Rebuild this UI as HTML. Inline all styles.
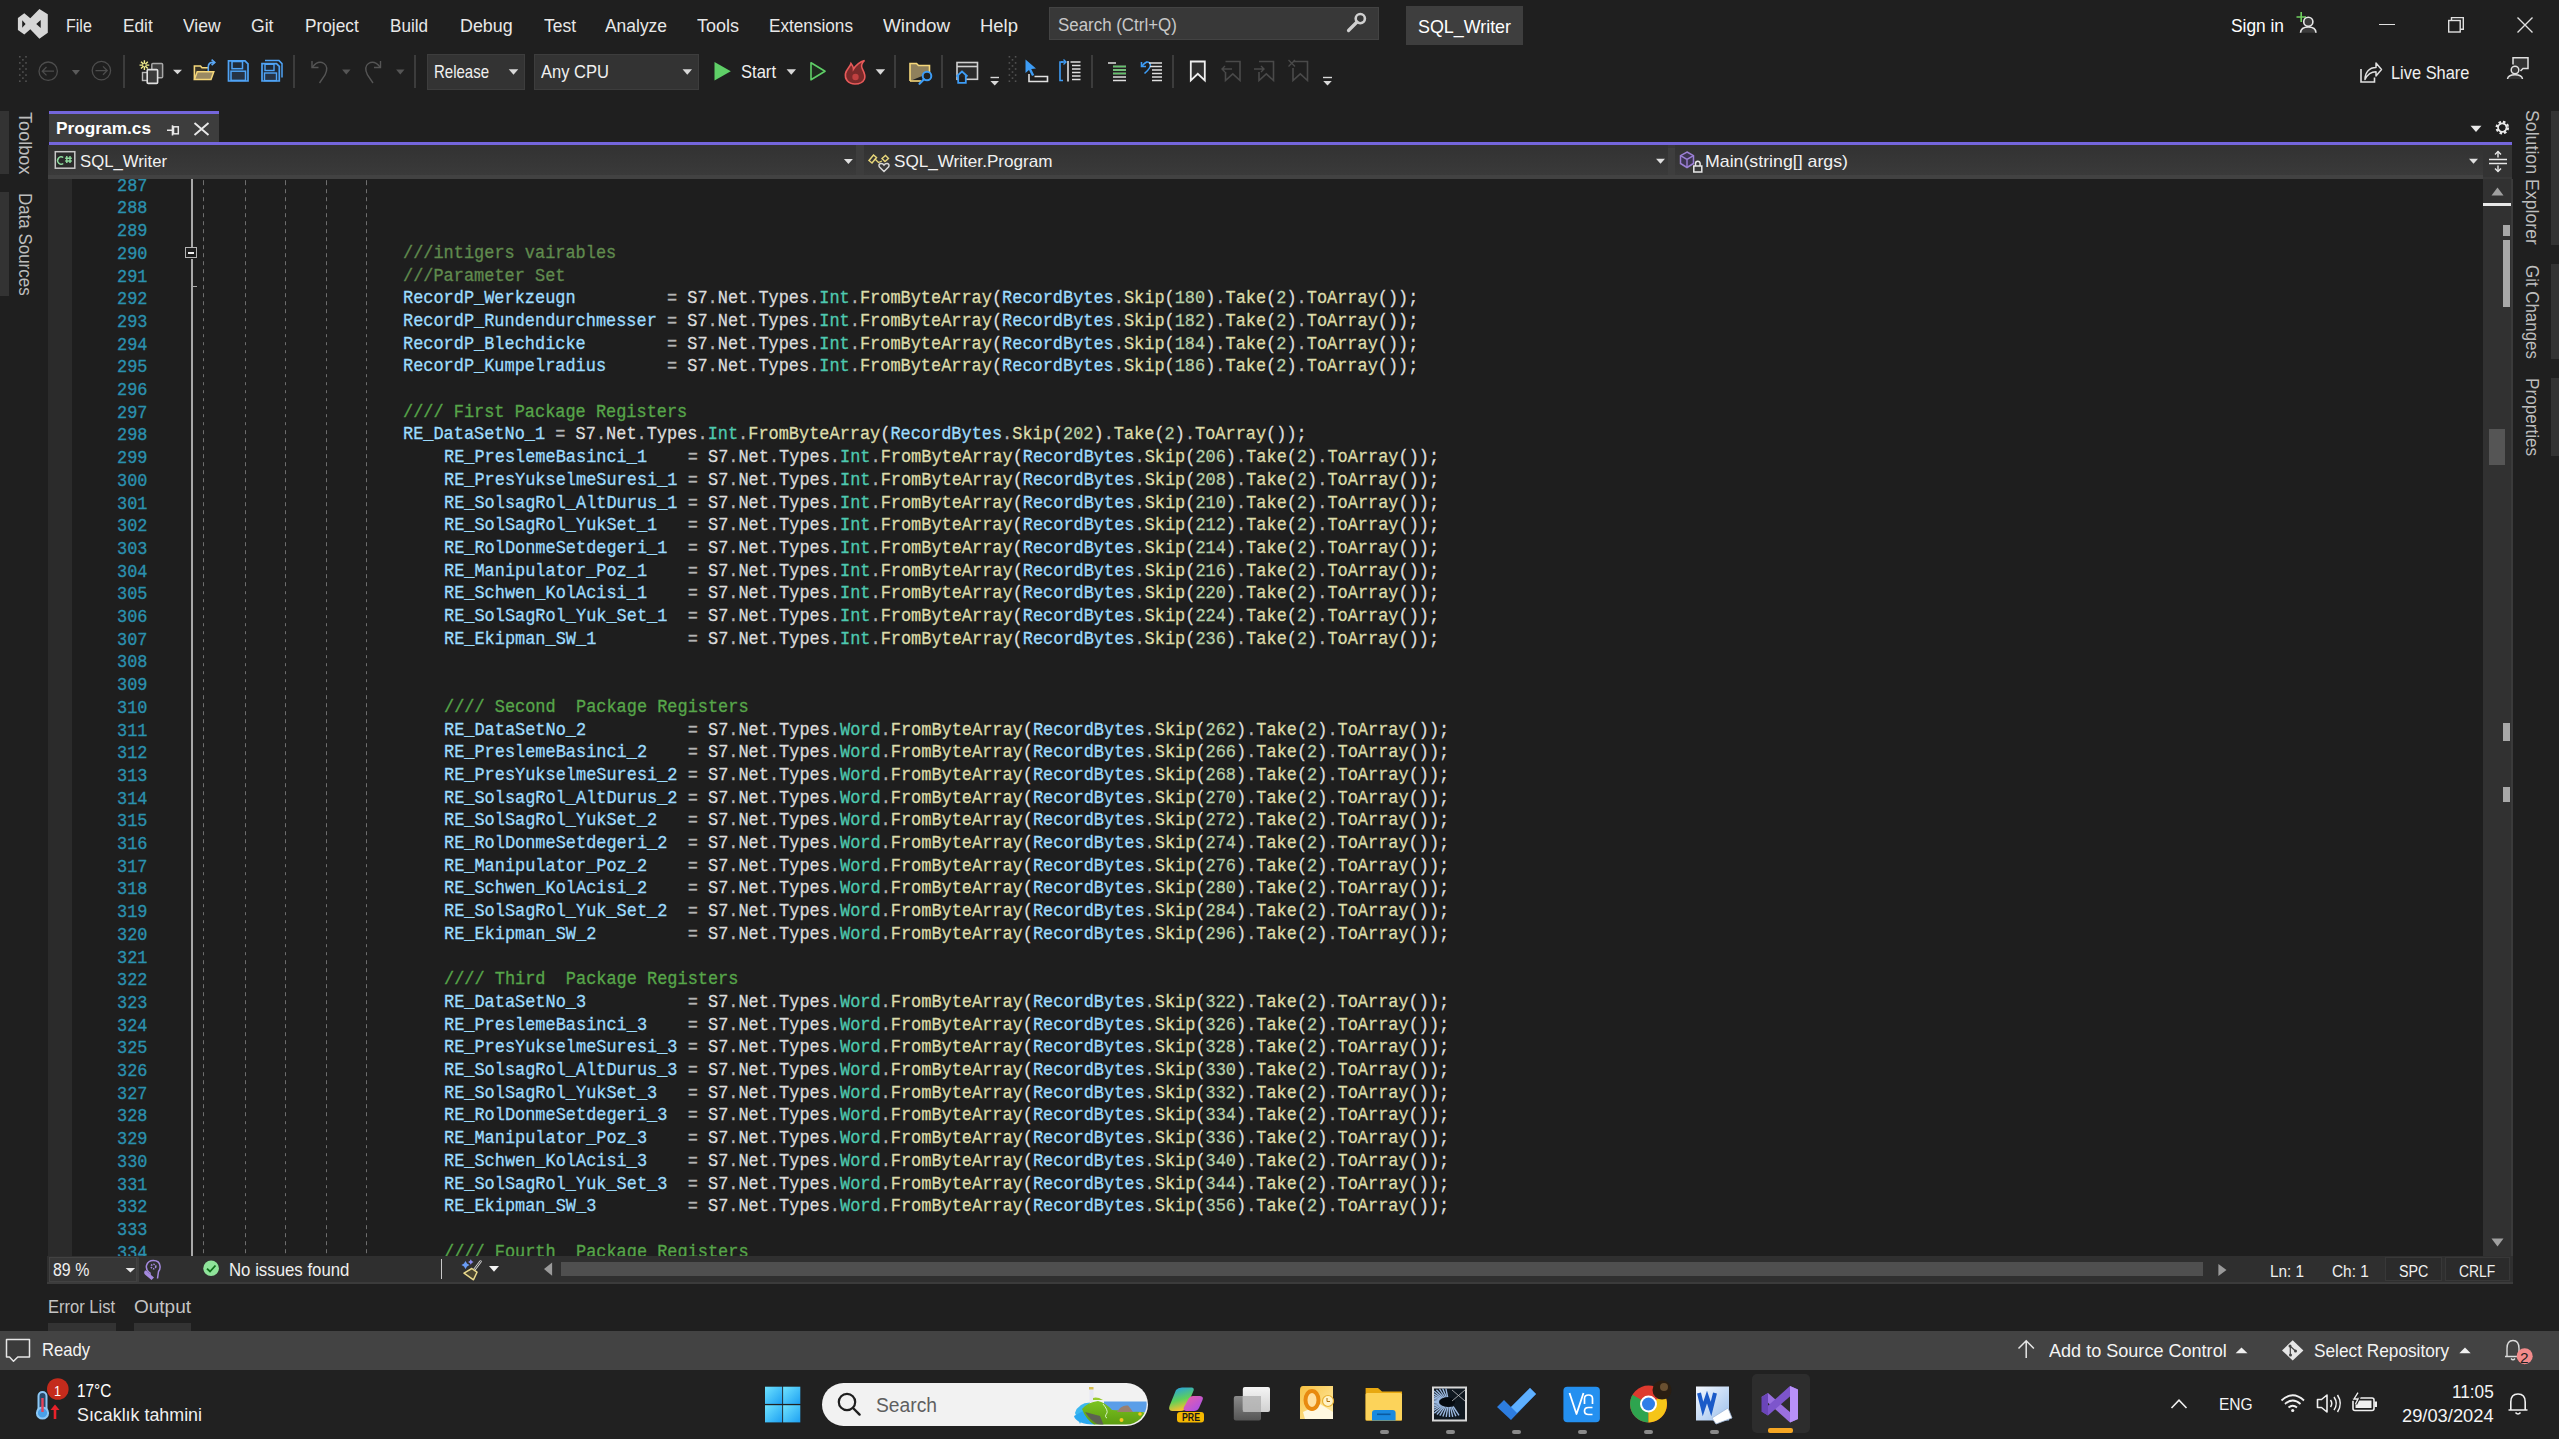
<!DOCTYPE html><html><head><meta charset="utf-8"><style>
html,body{margin:0;padding:0;width:2559px;height:1439px;overflow:hidden;background:#1f1f1f}
body>div,body>span,body>svg,.a{position:absolute}
.t{position:absolute;white-space:pre}
.t span{position:static}
</style></head><body>
<div style="left:0px;top:0px;width:2559px;height:1439px;background:#1f1f1f;"></div>
<span class="t" style="left:65.6px;top:16.94px;font-size:18.5px;line-height:18.5px;color:#e8e8e8;font-family:'Liberation Sans',sans-serif;transform:scaleX(0.8655);transform-origin:0 0;">File</span>
<span class="t" style="left:122.9px;top:16.94px;font-size:18.5px;line-height:18.5px;color:#e8e8e8;font-family:'Liberation Sans',sans-serif;transform:scaleX(0.9316);transform-origin:0 0;">Edit</span>
<span class="t" style="left:183.4px;top:16.94px;font-size:18.5px;line-height:18.5px;color:#e8e8e8;font-family:'Liberation Sans',sans-serif;transform:scaleX(0.9455);transform-origin:0 0;">View</span>
<span class="t" style="left:251.2px;top:16.94px;font-size:18.5px;line-height:18.5px;color:#e8e8e8;font-family:'Liberation Sans',sans-serif;transform:scaleX(0.9518);transform-origin:0 0;">Git</span>
<span class="t" style="left:305px;top:16.94px;font-size:18.5px;line-height:18.5px;color:#e8e8e8;font-family:'Liberation Sans',sans-serif;transform:scaleX(0.9326);transform-origin:0 0;">Project</span>
<span class="t" style="left:390px;top:16.94px;font-size:18.5px;line-height:18.5px;color:#e8e8e8;font-family:'Liberation Sans',sans-serif;transform:scaleX(0.9237);transform-origin:0 0;">Build</span>
<span class="t" style="left:460.3px;top:16.94px;font-size:18.5px;line-height:18.5px;color:#e8e8e8;font-family:'Liberation Sans',sans-serif;transform:scaleX(0.9667);transform-origin:0 0;">Debug</span>
<span class="t" style="left:544px;top:16.94px;font-size:18.5px;line-height:18.5px;color:#e8e8e8;font-family:'Liberation Sans',sans-serif;transform:scaleX(0.9432);transform-origin:0 0;">Test</span>
<span class="t" style="left:605px;top:16.94px;font-size:18.5px;line-height:18.5px;color:#e8e8e8;font-family:'Liberation Sans',sans-serif;transform:scaleX(0.9420);transform-origin:0 0;">Analyze</span>
<span class="t" style="left:697px;top:16.94px;font-size:18.5px;line-height:18.5px;color:#e8e8e8;font-family:'Liberation Sans',sans-serif;transform:scaleX(0.9725);transform-origin:0 0;">Tools</span>
<span class="t" style="left:769px;top:16.94px;font-size:18.5px;line-height:18.5px;color:#e8e8e8;font-family:'Liberation Sans',sans-serif;transform:scaleX(0.9282);transform-origin:0 0;">Extensions</span>
<span class="t" style="left:883px;top:16.94px;font-size:18.5px;line-height:18.5px;color:#e8e8e8;font-family:'Liberation Sans',sans-serif;transform:scaleX(1.0182);transform-origin:0 0;">Window</span>
<span class="t" style="left:980px;top:16.94px;font-size:18.5px;line-height:18.5px;color:#e8e8e8;font-family:'Liberation Sans',sans-serif;transform:scaleX(0.9987);transform-origin:0 0;">Help</span>
<svg class="a" style="left:10px;top:5px;" width="45" height="40" viewBox="10 5 45 40"><path fill-rule="evenodd" fill="#d6d6d6" d="M17.9,18 L24.3,13.3 L30.3,18.3 L39.4,8.9 L47.8,14.2 L47.8,32.8 L39.4,38.75 L30.3,29.2 L24.3,34.6 L17.9,30 Z M22.2,20.3 L25.6,23.9 L22.2,27.8 Z M40.7,20 L36.25,24 L40.7,28 Z"/></svg>
<div style="left:1049px;top:7px;width:330px;height:33px;background:#383838;box-sizing:border-box;border:1px solid #434343;"></div>
<span class="t" style="left:1057.6px;top:16.06px;font-size:18px;line-height:18px;color:#c8c8c8;font-family:'Liberation Sans',sans-serif;transform:scaleX(0.9389);transform-origin:0 0;">Search (Ctrl+Q)</span>
<svg class="a" style="left:1340px;top:8px;" width="32" height="28" viewBox="1340 8 32 28"><circle cx="1360.3" cy="18.6" r="4.6" stroke="#d0d0d0" stroke-width="2.6" fill="none"/><path d="M1357,22 L1348.5,30.5" stroke="#d0d0d0" stroke-width="3.2" stroke-linecap="round"/></svg>
<div style="left:1406px;top:6px;width:117px;height:39px;background:#3e3e3e;"></div>
<span class="t" style="left:1418px;top:17.94px;font-size:18.5px;line-height:18.5px;color:#ffffff;font-family:'Liberation Sans',sans-serif;transform:scaleX(0.9658);transform-origin:0 0;">SQL_Writer</span>
<span class="t" style="left:2230.5px;top:16.76px;font-size:18px;line-height:18px;color:#ffffff;font-family:'Liberation Sans',sans-serif;transform:scaleX(0.9629);transform-origin:0 0;">Sign in</span>
<svg class="a" style="left:2290px;top:8px;" width="32" height="28" viewBox="2290 8 32 28"><path d="M2296.5,17 H2306 M2301.2,12 V22" stroke="#6fcf5f" stroke-width="1.6"/><circle cx="2308.3" cy="21.8" r="4.6" stroke="#e8e8e8" stroke-width="1.6" fill="#3a3a3a"/><path d="M2300.5,32.7 Q2301,27 2308.3,27 Q2315.6,27 2316,32.7" stroke="#e8e8e8" stroke-width="1.6" fill="#3a3a3a"/></svg>
<div style="left:2379px;top:23.5px;width:16px;height:1.5px;background:#e0e0e0;"></div>
<svg class="a" style="left:2440px;top:10px;" width="32" height="30" viewBox="2440 10 32 30"><rect x="2448.7" y="20.5" width="11.5" height="11.5" stroke="#e0e0e0" stroke-width="1.4" fill="none"/><path d="M2451.5,20.5 V17.6 H2463.3 V29.2 H2460.2" stroke="#e0e0e0" stroke-width="1.4" fill="none"/></svg>
<svg class="a" style="left:2510px;top:10px;" width="30" height="30" viewBox="2510 10 30 30"><path d="M2517.5,17.5 L2532.5,32.5 M2532.5,17.5 L2517.5,32.5" stroke="#e0e0e0" stroke-width="1.4"/></svg>
<svg class="a" style="left:15px;top:52px;" width="15" height="38" viewBox="15 52 15 38"><rect x="19" y="56.00" width="1.6" height="1.6" fill="#525252"/><rect x="25.2" y="56.00" width="1.6" height="1.6" fill="#525252"/><rect x="22.1" y="59.05" width="1.6" height="1.6" fill="#525252"/><rect x="19" y="62.10" width="1.6" height="1.6" fill="#525252"/><rect x="25.2" y="62.10" width="1.6" height="1.6" fill="#525252"/><rect x="22.1" y="65.15" width="1.6" height="1.6" fill="#525252"/><rect x="19" y="68.20" width="1.6" height="1.6" fill="#525252"/><rect x="25.2" y="68.20" width="1.6" height="1.6" fill="#525252"/><rect x="22.1" y="71.25" width="1.6" height="1.6" fill="#525252"/><rect x="19" y="74.30" width="1.6" height="1.6" fill="#525252"/><rect x="25.2" y="74.30" width="1.6" height="1.6" fill="#525252"/><rect x="22.1" y="77.35" width="1.6" height="1.6" fill="#525252"/><rect x="19" y="80.40" width="1.6" height="1.6" fill="#525252"/><rect x="25.2" y="80.40" width="1.6" height="1.6" fill="#525252"/></svg>
<svg class="a" style="left:1004px;top:52px;" width="16" height="38" viewBox="1004 52 16 38"><rect x="1008.6" y="56.00" width="1.6" height="1.6" fill="#525252"/><rect x="1014.8" y="56.00" width="1.6" height="1.6" fill="#525252"/><rect x="1011.7" y="59.05" width="1.6" height="1.6" fill="#525252"/><rect x="1008.6" y="62.10" width="1.6" height="1.6" fill="#525252"/><rect x="1014.8" y="62.10" width="1.6" height="1.6" fill="#525252"/><rect x="1011.7" y="65.15" width="1.6" height="1.6" fill="#525252"/><rect x="1008.6" y="68.20" width="1.6" height="1.6" fill="#525252"/><rect x="1014.8" y="68.20" width="1.6" height="1.6" fill="#525252"/><rect x="1011.7" y="71.25" width="1.6" height="1.6" fill="#525252"/><rect x="1008.6" y="74.30" width="1.6" height="1.6" fill="#525252"/><rect x="1014.8" y="74.30" width="1.6" height="1.6" fill="#525252"/><rect x="1011.7" y="77.35" width="1.6" height="1.6" fill="#525252"/><rect x="1008.6" y="80.40" width="1.6" height="1.6" fill="#525252"/><rect x="1014.8" y="80.40" width="1.6" height="1.6" fill="#525252"/></svg>
<svg class="a" style="left:36px;top:58px;" width="78" height="28" viewBox="36 58 78 28"><circle cx="48.2" cy="71.2" r="9.2" stroke="#4d4d4d" stroke-width="1.3" fill="none"/><path d="M54,71.2 H42.5 M46.5,67 L42.3,71.2 L46.5,75.4" stroke="#4d4d4d" stroke-width="1.3" fill="none"/><path d="M71.9,70.0 L79.9,70.0 L75.9,75.0 Z" fill="#5a5a5a"/><circle cx="101.4" cy="70.6" r="9.2" stroke="#4d4d4d" stroke-width="1.3" fill="none"/><path d="M95.5,70.6 H107 M103,66.4 L107.2,70.6 L103,74.8" stroke="#4d4d4d" stroke-width="1.3" fill="none"/></svg>
<div style="left:122.9px;top:55px;width:2px;height:33px;background:#3c3c3c;"></div>
<div style="left:293px;top:55px;width:2px;height:33px;background:#3c3c3c;"></div>
<div style="left:414px;top:55px;width:2px;height:33px;background:#3c3c3c;"></div>
<div style="left:894px;top:55px;width:2px;height:33px;background:#3c3c3c;"></div>
<div style="left:941px;top:55px;width:2px;height:33px;background:#3c3c3c;"></div>
<div style="left:1091px;top:55px;width:2px;height:33px;background:#3c3c3c;"></div>
<div style="left:1172px;top:55px;width:2px;height:33px;background:#3c3c3c;"></div>
<svg class="a" style="left:136px;top:56px;" width="50" height="30" viewBox="136 56 50 30"><rect x="151.8" y="63.4" width="10.8" height="14.4" rx="1" stroke="#a8a8a8" stroke-width="1.5" fill="#3c3c3c"/><rect x="142.5" y="72.5" width="8" height="8" stroke="#b8b8b8" stroke-width="1.4" fill="#333"/><rect x="147.2" y="69.6" width="10.4" height="13.8" rx="1" stroke="#e0e0e0" stroke-width="1.6" fill="#3a3a3a"/><path d="M144.4,60.2 V70 M139.5,65.1 H149.3 M141,61.7 L147.8,68.5 M147.8,61.7 L141,68.5" stroke="#f0ec8c" stroke-width="1.4"/><circle cx="144.4" cy="65.1" r="1.3" fill="#1f1f1f"/><path d="M173.0,69.7 L182.0,69.7 L177.5,74.3 Z" fill="#d8d8d8"/></svg>
<svg class="a" style="left:190px;top:56px;" width="30" height="30" viewBox="190 56 30 30"><path d="M194.4,79.6 V66 H200.5 L202,67.8 H208.5" stroke="#f5d77a" stroke-width="1.6" fill="#3a3528"/><path d="M194.4,79.6 L197.2,71.8 H213.8 L211,79.6 Z" stroke="#f5d77a" stroke-width="1.5" fill="#9a8a63"/><path d="M208.3,71 V66.5 Q208.5,62.4 213,62.4 H214.5" stroke="#5aa7f5" stroke-width="1.6" fill="none"/><path d="M211.6,59.6 L214.8,62.4 L211.6,65.2" stroke="#5aa7f5" stroke-width="1.6" fill="none"/></svg>
<svg class="a" style="left:224px;top:56px;" width="64" height="30" viewBox="224 56 64 30"><path d="M228.5,60.8 H245 L248,63.8 V81 H228.5 Z" stroke="#4fa3f5" stroke-width="1.7" fill="#1f2a38"/><rect x="232" y="61.5" width="10.5" height="7.2" stroke="#4fa3f5" stroke-width="1.5" fill="none"/><rect x="231" y="71.2" width="14.5" height="9.2" stroke="#4fa3f5" stroke-width="1.5" fill="#263345"/><path d="M265,60.6 H279 L282,63.6 V77.5" stroke="#4fa3f5" stroke-width="1.5" fill="none"/><path d="M262,63.6 H276.5 L279.3,66.4 V81 H262 Z" stroke="#4fa3f5" stroke-width="1.7" fill="#1f2a38"/><rect x="265" y="64.3" width="9" height="6.2" stroke="#4fa3f5" stroke-width="1.4" fill="none"/><rect x="264.5" y="73" width="12" height="7.6" stroke="#4fa3f5" stroke-width="1.4" fill="#263345"/></svg>
<svg class="a" style="left:305px;top:56px;" width="105" height="32" viewBox="305 56 105 32"><path d="M312,61 V67.5 H318.5" stroke="#555" stroke-width="1.4" fill="none"/><path d="M312.5,67 Q318,60 324,63.5 Q329,67 325,75 L319.5,83" stroke="#555" stroke-width="1.4" fill="none"/><path d="M342.05,69.6 L350.55,69.6 L346.3,74.4 Z" fill="#555"/><path d="M380.5,61 V67.5 H374" stroke="#555" stroke-width="1.4" fill="none"/><path d="M380,67 Q374.5,60 368.5,63.5 Q363.5,67 367.5,75 L373,83" stroke="#555" stroke-width="1.4" fill="none"/><path d="M396.05,69.6 L404.55,69.6 L400.3,74.4 Z" fill="#555"/></svg>
<div style="left:427px;top:54px;width:98px;height:36px;background:#333333;box-sizing:border-box;border:1px solid #3d3d3d;"></div>
<span class="t" style="left:434px;top:63.34px;font-size:18.5px;line-height:18.5px;color:#f0f0f0;font-family:'Liberation Sans',sans-serif;transform:scaleX(0.8103);transform-origin:0 0;">Release</span>
<svg class="a" style="left:500px;top:62px;" width="22" height="20" viewBox="500 62 22 20"><path d="M508.75,69.25 L518.25,69.25 L513.5,74.75 Z" fill="#d8d8d8"/></svg>
<div style="left:534px;top:54px;width:165px;height:36px;background:#333333;box-sizing:border-box;border:1px solid #3d3d3d;"></div>
<span class="t" style="left:540.5px;top:63.34px;font-size:18.5px;line-height:18.5px;color:#f0f0f0;font-family:'Liberation Sans',sans-serif;transform:scaleX(0.8938);transform-origin:0 0;">Any CPU</span>
<svg class="a" style="left:675px;top:62px;" width="22" height="20" viewBox="675 62 22 20"><path d="M682.55,69.25 L692.05,69.25 L687.3,74.75 Z" fill="#d8d8d8"/></svg>
<svg class="a" style="left:708px;top:56px;" width="192" height="32" viewBox="708 56 192 32"><path d="M714.5,62 L730.8,71.3 L714.5,80.6 Z" fill="#5fcf67"/><path d="M786.55,69.25 L796.05,69.25 L791.3,74.75 Z" fill="#d8d8d8"/><path d="M811,62.8 L825,71.3 L811,79.8 Z" stroke="#5fcf67" stroke-width="1.6" fill="#1e2a1e" stroke-linejoin="round"/><path d="M855,84 C848,84 844.5,79 845.5,73.5 C846.5,69 850,67 851,63.5 C853,66 853.5,68 853.5,69 C855.5,66 858,62.5 864.5,60.5 C861.5,63.5 861,66 862,68 C864,72 866,75.5 864.5,79 C863,82.5 859,84 855,84 Z" stroke="#e85a5a" stroke-width="1.6" fill="#7a2a2a"/><circle cx="855.5" cy="77" r="3.2" fill="#c04040"/><path d="M875.65,69.25 L885.15,69.25 L880.4,74.75 Z" fill="#d8d8d8"/></svg>
<span class="t" style="left:741px;top:63.34px;font-size:18.5px;line-height:18.5px;color:#f0f0f0;font-family:'Liberation Sans',sans-serif;transform:scaleX(0.8958);transform-origin:0 0;">Start</span>
<svg class="a" style="left:905px;top:56px;" width="33" height="32" viewBox="905 56 33 32"><path d="M910,81 V63.5 H916.5 L918.5,65.5 H929.5 V73" stroke="#f5d77a" stroke-width="1.6" fill="#8f805c"/><path d="M910,81 H921" stroke="#f5d77a" stroke-width="1.6"/><circle cx="927" cy="76" r="4.3" stroke="#3d9cf5" stroke-width="2" fill="#1f1f1f"/><path d="M924,79.2 L919.5,83.8" stroke="#3d9cf5" stroke-width="2.2" stroke-linecap="round"/></svg>
<svg class="a" style="left:952px;top:56px;" width="50" height="34" viewBox="952 56 50 34"><rect x="957" y="62.5" width="20.5" height="16.8" stroke="#d0d0d0" stroke-width="1.6" fill="#2b2b2b"/><path d="M957,66.5 H977.5" stroke="#d0d0d0" stroke-width="1.6"/><path d="M956.5,76.5 L962,71.5 L967.5,76.5 M958.2,75.5 V82.8 H965.8 V75.5" stroke="#3d9cf5" stroke-width="1.8" fill="#1f1f1f"/><path d="M990.5,77.5 H999" stroke="#d8d8d8" stroke-width="1.4"/><path d="M990.45,80.95 L998.95,80.95 L994.7,85.45 Z" fill="#d8d8d8"/></svg>
<svg class="a" style="left:1022px;top:56px;" width="68" height="32" viewBox="1022 56 68 32"><path d="M1025.5,59.5 L1025.5,73 L1029,70 L1032,76 L1034.2,75 L1031.2,69 L1036,68.5 Z" fill="#3d9cf5"/><path d="M1029,74 V81.5 H1047.5 V76.5 H1034.5" stroke="#e0e0e0" stroke-width="1.6" fill="none"/><path d="M1063,62 H1060 V80.5 H1063" stroke="#3d9cf5" stroke-width="1.6" fill="none"/><path d="M1061,62 L1065.5,62" stroke="#3d9cf5" stroke-width="1.6"/><path d="M1063.5,59.5 L1066,62 L1063.5,64.5" stroke="#3d9cf5" stroke-width="1.4" fill="none"/><path d="M1068,61 V81.5" stroke="#e0e0e0" stroke-width="1.6"/><path d="M1070.5,62 H1080.5 M1072,65.5 H1080.5 M1072,69 H1080.5 M1072,72.5 H1080.5 M1072,76 H1080.5 M1072,79.5 H1080.5" stroke="#e0e0e0" stroke-width="1.4"/></svg>
<svg class="a" style="left:1100px;top:56px;" width="70" height="32" viewBox="1100 56 70 32"><path d="M1108,63 H1116 M1113,66.5 H1126 M1113,70 H1126 M1113,73.5 H1126 M1113,77 H1126 M1113,80.5 H1126" stroke="#e0e0e0" stroke-width="1.4"/><path d="M1113,66.5 H1126 M1113,70 H1126 M1113,73.5 H1126" stroke="#62c46a" stroke-width="1.4"/><path d="M1141.5,62 V66.5 H1146" stroke="#3d9cf5" stroke-width="1.6" fill="none"/><path d="M1142,66 Q1147,59.5 1150,63.5 Q1152,67 1144.5,73.5" stroke="#3d9cf5" stroke-width="1.6" fill="none"/><path d="M1149,63 H1162 M1150,66.5 H1162 M1152,70 H1162 M1152,73.5 H1162 M1152,77 H1162 M1152,80.5 H1162" stroke="#e0e0e0" stroke-width="1.4"/></svg>
<svg class="a" style="left:1185px;top:56px;" width="155" height="34" viewBox="1185 56 155 34"><path d="M1190.8,61.5 H1204.8 V80.5 L1197.8,73.8 L1190.8,80.5 Z" stroke="#f0f0f0" stroke-width="1.8" fill="#303030" stroke-linejoin="miter"/><path d="M1225.5,61.5 H1240 V80.5 L1232.8,73.8 L1225.5,80.5 V72" stroke="#4a4a4a" stroke-width="1.6" fill="none"/><path d="M1232,69 H1222 M1225,66 L1222,69 L1225,72" stroke="#4a4a4a" stroke-width="1.4" fill="none"/><path d="M1259,61.5 H1273.5 V80.5 L1266.3,73.8 L1259,80.5 V72" stroke="#4a4a4a" stroke-width="1.6" fill="none"/><path d="M1254,69 H1264 M1261,66 L1264,69 L1261,72" stroke="#4a4a4a" stroke-width="1.4" fill="none"/><path d="M1293,61.5 H1307.5 V80.5 L1300.3,73.8 L1293,80.5 V68" stroke="#4a4a4a" stroke-width="1.6" fill="none"/><path d="M1288.5,60 L1295,66.5 M1295,60 L1288.5,66.5" stroke="#4a4a4a" stroke-width="1.4"/><path d="M1323,77.5 H1332" stroke="#d8d8d8" stroke-width="1.4"/><path d="M1323.25,80.95 L1331.75,80.95 L1327.5,85.45 Z" fill="#d8d8d8"/></svg>
<svg class="a" style="left:2355px;top:55px;" width="180" height="33" viewBox="2355 55 180 33"><path d="M2361,69 V82 H2374.5 V77.5" stroke="#e0e0e0" stroke-width="1.6" fill="none"/><path d="M2365,79.5 C2365,72 2369.5,67.5 2376,67.5 V63 L2381.5,69.5 L2376,76 V71.8 C2371,71.8 2367.5,74.5 2365,79.5 Z" stroke="#e0e0e0" stroke-width="1.5" fill="none" stroke-linejoin="round"/><path d="M2513,64.5 V57.8 H2528 V68.5 H2523 L2520.5,71" stroke="#e0e0e0" stroke-width="1.5" fill="#333"/><circle cx="2515" cy="70" r="3.8" stroke="#e0e0e0" stroke-width="1.5" fill="#333"/><path d="M2507.5,79 Q2508,74.8 2515,74.8 Q2522,74.8 2522.5,79" stroke="#e0e0e0" stroke-width="1.5" fill="#333"/></svg>
<span class="t" style="left:2391.4px;top:64.14px;font-size:18.5px;line-height:18.5px;color:#f0f0f0;font-family:'Liberation Sans',sans-serif;transform:scaleX(0.8864);transform-origin:0 0;">Live Share</span>
<div style="left:48px;top:179px;width:2435px;height:1077px;background:#1e1e1e;"></div>
<div style="left:48px;top:179px;width:24px;height:1077px;background:#2b2b2b;"></div>
<div style="left:49px;top:111px;width:170px;height:3px;background:#7466dc;"></div>
<div style="left:49px;top:114px;width:170px;height:28px;background:#3d3d3d;"></div>
<div style="left:49px;top:142px;width:2463px;height:3px;background:#7466dc;"></div>
<span class="t" style="left:55.5px;top:120.21px;font-size:17px;line-height:17px;color:#ffffff;font-family:'Liberation Sans',sans-serif;font-weight:bold;transform:scaleX(1.0156);transform-origin:0 0;">Program.cs</span>
<div style="left:48px;top:145px;width:2464px;height:34px;background:#383838;"></div>
<div style="left:48px;top:145px;width:808px;height:30px;background:linear-gradient(#323232,#3a3a3a);"></div>
<div style="left:856px;top:145px;width:8px;height:30px;background:#3d3d3d;"></div>
<div style="left:864px;top:145px;width:804px;height:30px;background:linear-gradient(#323232,#3a3a3a);"></div>
<div style="left:1675px;top:145px;width:808px;height:30px;background:linear-gradient(#323232,#3a3a3a);"></div>
<div style="left:48px;top:175px;width:2435px;height:4px;background:#424242;"></div>
<div style="left:2483px;top:145px;width:29px;height:32px;background:#333333;"></div>
<span class="t" style="left:80px;top:153.21px;font-size:17px;line-height:17px;color:#f1f1f1;font-family:'Liberation Sans',sans-serif;transform:scaleX(0.9832);transform-origin:0 0;">SQL_Writer</span>
<span class="t" style="left:893.8px;top:153.21px;font-size:17px;line-height:17px;color:#f1f1f1;font-family:'Liberation Sans',sans-serif;transform:scaleX(1.0066);transform-origin:0 0;">SQL_Writer.Program</span>
<span class="t" style="left:1705px;top:153.21px;font-size:17px;line-height:17px;color:#f1f1f1;font-family:'Liberation Sans',sans-serif;transform:scaleX(1.0439);transform-origin:0 0;">Main(string[] args)</span>
<svg class="a" style="left:160px;top:116px;" width="55" height="24" viewBox="160 116 55 24"><path d="M167,130.2 H173 M172.5,125.2 V135.6" stroke="#e8e8e8" stroke-width="1.6"/><rect x="173.5" y="126.8" width="4.8" height="7" stroke="#e8e8e8" stroke-width="1.5" fill="#3d3d3d"/><path d="M194.5,123 L208.5,135 M208.5,123 L194.5,135" stroke="#e8e8e8" stroke-width="1.9"/></svg>
<svg class="a" style="left:52px;top:148px;" width="26" height="24" viewBox="52 148 26 24"><rect x="55.3" y="151.7" width="19.5" height="16.5" stroke="#c8c8c8" stroke-width="1.5" fill="#2a2a2a"/><path d="M63.2,157.5 A3.4,3.8 0 1 0 63.2,163.5" stroke="#8fdc9f" stroke-width="1.5" fill="none"/><path d="M66.8,156 V163 M70,156 V163 M65.2,158.3 H71.8 M65.2,161 H71.8" stroke="#8fdc9f" stroke-width="1.4"/></svg>
<svg class="a" style="left:830px;top:150px;" width="30" height="22" viewBox="830 150 30 22"><path d="M843.9,158.9 L852.9,158.9 L848.4,163.9 Z" fill="#e0e0e0"/></svg>
<svg class="a" style="left:866px;top:148px;" width="26" height="26" viewBox="866 148 26 26"><path d="M869,160.5 L873.5,155 L876.5,157.5 L872,163 Z" stroke="#e8d77a" stroke-width="1.5" fill="none"/><path d="M875,159 L878.5,162.5 L882,161" stroke="#e8d77a" stroke-width="1.3" fill="none"/><path d="M882,158.5 L885.5,155.5 L888.5,158.5 L885,161.5 Z" stroke="#e8d77a" stroke-width="1.4" fill="none"/><path d="M884,171.5 L879.5,167 Q878,164.5 880.5,163.5 Q882.5,163 884,165 Q885.5,163 887.5,163.5 Q890,164.5 888.5,167 Z" stroke="#d8d8d8" stroke-width="1.5" fill="#3a3a3a"/></svg>
<svg class="a" style="left:1645px;top:150px;" width="27" height="22" viewBox="1645 150 27 22"><path d="M1656.0,158.7 L1665.0,158.7 L1660.5,163.7 Z" fill="#e0e0e0"/></svg>
<div style="left:1668px;top:148px;width:7px;height:27px;background:#3e3e3e;"></div>
<svg class="a" style="left:1676px;top:148px;" width="30" height="27" viewBox="1676 148 30 27"><path d="M1687,152 L1693.5,155.6 V163.5 L1687,167.5 L1680.5,163.5 V155.6 Z" stroke="#9b7fd4" stroke-width="1.5" fill="#3c3450"/><path d="M1680.5,155.6 L1687,159.4 L1693.5,155.6 M1687,159.4 V167.5" stroke="#9b7fd4" stroke-width="1.4" fill="none"/><rect x="1693.8" y="166" width="8" height="6" stroke="#e8e8e8" stroke-width="1.5" fill="#3a3a3a"/><path d="M1695.5,166 V163.5 A2.3,2.3 0 0 1 1700.1,163.5 V166" stroke="#e8e8e8" stroke-width="1.5" fill="none"/></svg>
<svg class="a" style="left:2455px;top:148px;" width="35" height="26" viewBox="2455 148 35 26"><path d="M2469.0,158.7 L2478.0,158.7 L2473.5,163.7 Z" fill="#e0e0e0"/></svg>
<svg class="a" style="left:2485px;top:148px;" width="27" height="28" viewBox="2485 148 27 28"><path d="M2489,159.5 H2507 M2489,163.5 H2507" stroke="#e8e8e8" stroke-width="1.5"/><path d="M2498,151.5 V157.5 M2498,165.5 V171.5" stroke="#e8e8e8" stroke-width="1.4"/><path d="M2495,154.5 L2498,151.5 L2501,154.5 M2495,168.5 L2498,171.5 L2501,168.5" stroke="#e8e8e8" stroke-width="1.4" fill="none"/></svg>
<svg class="a" style="left:2465px;top:118px;" width="50" height="20" viewBox="2465 118 50 20"><path d="M2470.5,125.75 L2481.5,125.75 L2476,132.05 Z" fill="#e8e8e8"/><g transform="translate(2502.3,127.6)"><circle r="5.2" fill="none" stroke="#e8e8e8" stroke-width="3.2" stroke-dasharray="2.3 1.78"/><circle r="4.3" fill="none" stroke="#e8e8e8" stroke-width="1.7"/><circle r="1.6" fill="#1f1f1f"/></g></svg>
<div style="left:0px;top:111px;width:9px;height:63px;background:#333333;"></div>
<div style="left:0px;top:192px;width:9px;height:104px;background:#333333;"></div>
<div style="left:2551px;top:111px;width:8px;height:134px;background:#333333;"></div>
<div style="left:2551px;top:264px;width:8px;height:95px;background:#333333;"></div>
<div style="left:2551px;top:378px;width:8px;height:78px;background:#333333;"></div>
<span class="t" style="left:14.5px;top:111.5px;font-family:'Liberation Sans',sans-serif;font-size:17.5px;line-height:17.5px;color:#bdbdbd;transform-origin:0 0;transform:translate(17.5px,0) rotate(90deg) scaleX(1.0361)">Toolbox</span>
<span class="t" style="left:14.5px;top:193.4px;font-family:'Liberation Sans',sans-serif;font-size:17.5px;line-height:17.5px;color:#bdbdbd;transform-origin:0 0;transform:translate(17.5px,0) rotate(90deg) scaleX(0.9677)">Data Sources</span>
<span class="t" style="left:2522px;top:110px;font-family:'Liberation Sans',sans-serif;font-size:17.5px;line-height:17.5px;color:#bdbdbd;transform-origin:0 0;transform:translate(17.5px,0) rotate(90deg) scaleX(1.0130)">Solution Explorer</span>
<span class="t" style="left:2522px;top:264.6px;font-family:'Liberation Sans',sans-serif;font-size:17.5px;line-height:17.5px;color:#bdbdbd;transform-origin:0 0;transform:translate(17.5px,0) rotate(90deg) scaleX(0.9653)">Git Changes</span>
<span class="t" style="left:2522px;top:377.8px;font-family:'Liberation Sans',sans-serif;font-size:17.5px;line-height:17.5px;color:#bdbdbd;transform-origin:0 0;transform:translate(17.5px,0) rotate(90deg) scaleX(0.9804)">Properties</span>
<div style="left:2483px;top:179px;width:28px;height:1077px;background:#313131;"></div>
<div style="left:2510.5px;top:179px;width:2.5px;height:1077px;background:#3a3a3a;"></div>
<svg class="a" style="left:2483px;top:180px;" width="29" height="20" viewBox="2483 180 29 20"><path d="M2491.5,195.5 L2497.5,187.5 L2503.5,195.5 Z" fill="#a0a0a0"/></svg>
<div style="left:2483px;top:202.5px;width:28px;height:3px;background:#e8e8e8;"></div>
<div style="left:2503px;top:224.7px;width:7.2px;height:11.6px;background:#a8a8a8;"></div>
<div style="left:2503px;top:239.7px;width:7.2px;height:67.3px;background:#a8a8a8;"></div>
<div style="left:2488.5px;top:428.7px;width:16.2px;height:36.3px;background:#555555;"></div>
<div style="left:2503px;top:722.5px;width:7.2px;height:18.2px;background:#a8a8a8;"></div>
<div style="left:2503px;top:787px;width:7.2px;height:14.8px;background:#a8a8a8;"></div>
<svg class="a" style="left:2483px;top:1234px;" width="29" height="20" viewBox="2483 1234 29 20"><path d="M2491.5,1238.5 L2503.5,1238.5 L2497.5,1246.5 Z" fill="#a0a0a0"/></svg>
<div style="left:47px;top:1256px;width:2466px;height:28px;background:#2f2f2f;"></div>
<div style="left:47px;top:1282px;width:2466px;height:2px;background:#3b3b3b;"></div>
<div style="left:49px;top:1257px;width:88px;height:25px;background:#363636;box-sizing:border-box;border:1px solid #424242;"></div>
<div style="left:137px;top:1257px;width:2px;height:25px;background:#3d3d3d;"></div>
<span class="t" style="left:52.5px;top:1261.99px;font-size:17.5px;line-height:17.5px;color:#f0f0f0;font-family:'Liberation Sans',sans-serif;transform:scaleX(0.9101);transform-origin:0 0;">89 %</span>
<svg class="a" style="left:120px;top:1262px;" width="20" height="16" viewBox="120 1262 20 16"><path d="M125.65,1267.9 L135.15,1267.9 L130.4,1272.5 Z" fill="#e8e8e8"/></svg>
<svg class="a" style="left:140px;top:1257px;" width="25" height="25" viewBox="140 1257 25 25"><path d="M150,1276.5 V1273 Q145.5,1270 146.5,1265.5 Q148,1260.5 153.3,1260.5 Q159.5,1260.5 160,1266 Q160.5,1269 158.5,1271.5 L157.5,1278.5" stroke="#a58ae0" stroke-width="1.5" fill="none"/><circle cx="153.5" cy="1266.5" r="2.3" stroke="#a58ae0" stroke-width="1.6" fill="none" stroke-dasharray="1.4 1"/><path d="M145,1270.5 Q143,1273 145.5,1275 L151.5,1280 L154,1277.5 L148,1272.5 Q146.5,1270 145,1270.5 Z" fill="#a58ae0"/></svg>
<svg class="a" style="left:200px;top:1257px;" width="25" height="25" viewBox="200 1257 25 25"><circle cx="211.1" cy="1268.2" r="7.8" fill="#8fe39a"/><path d="M207,1268.6 L210,1271.5 L215.5,1265.5" stroke="#0f6e1b" stroke-width="1.8" fill="none"/></svg>
<span class="t" style="left:228.6px;top:1261.99px;font-size:17.5px;line-height:17.5px;color:#f0f0f0;font-family:'Liberation Sans',sans-serif;transform:scaleX(0.9594);transform-origin:0 0;">No issues found</span>
<div style="left:440.8px;top:1259px;width:1.4px;height:20px;background:#c8c8c8;"></div>
<svg class="a" style="left:458px;top:1257px;" width="44" height="26" viewBox="458 1257 44 26"><path d="M480.5,1261.5 L474.5,1269.5" stroke="#cfcfcf" stroke-width="2.6" stroke-linecap="round"/><path d="M480.5,1261.5 L474.5,1269.5" stroke="#2f2f2f" stroke-width="0.9" stroke-linecap="round"/><path d="M471.8,1268.5 L477,1272.2 L473.5,1279.8 L464,1273.2 Z" stroke="#e9d98c" stroke-width="1.5" fill="#4a4430" stroke-linejoin="round"/><path d="M465.5,1261 L467,1263.5 L469.5,1265 L467,1266.5 L465.5,1269 L464,1266.5 L461.5,1265 L464,1263.5 Z" fill="#6a9cf5"/><path d="M470.8,1259.2 L471.8,1261 L473.6,1262 L471.8,1263 L470.8,1264.8 L469.8,1263 L468,1262 L469.8,1261 Z" fill="#8c8cf0"/><path d="M489.0,1265.95 L499.0,1265.95 L494,1271.6499999999999 Z" fill="#f4f4f4"/></svg>
<svg class="a" style="left:540px;top:1260px;" width="16" height="18" viewBox="540 1260 16 18"><path d="M552.1,1262.4 L544,1269.1 L552.1,1275.8 Z" fill="#9a9a9a"/></svg>
<div style="left:561px;top:1262px;width:1642px;height:14px;background:#4f4f4f;"></div>
<svg class="a" style="left:2214px;top:1260px;" width="16" height="18" viewBox="2214 1260 16 18"><path d="M2218.4,1264 L2226.5,1270 L2218.4,1275.9 Z" fill="#9a9a9a"/></svg>
<span class="t" style="left:2269.5px;top:1262.63px;font-size:16.5px;line-height:16.5px;color:#f0f0f0;font-family:'Liberation Sans',sans-serif;transform:scaleX(0.9292);transform-origin:0 0;">Ln: 1</span>
<span class="t" style="left:2332.3px;top:1262.63px;font-size:16.5px;line-height:16.5px;color:#f0f0f0;font-family:'Liberation Sans',sans-serif;transform:scaleX(0.9306);transform-origin:0 0;">Ch: 1</span>
<div style="left:2385px;top:1257px;width:57px;height:24px;background:#2b2b2b;box-sizing:border-box;border:1px solid #383838;"></div>
<div style="left:2445px;top:1257px;width:65px;height:24px;background:#2b2b2b;box-sizing:border-box;border:1px solid #383838;"></div>
<span class="t" style="left:2399.2px;top:1262.63px;font-size:16.5px;line-height:16.5px;color:#f0f0f0;font-family:'Liberation Sans',sans-serif;transform:scaleX(0.8665);transform-origin:0 0;">SPC</span>
<span class="t" style="left:2459.3px;top:1262.63px;font-size:16.5px;line-height:16.5px;color:#f0f0f0;font-family:'Liberation Sans',sans-serif;transform:scaleX(0.8401);transform-origin:0 0;">CRLF</span>
<span class="t" style="left:48px;top:1297.56px;font-size:18px;line-height:18px;color:#c4c4c4;font-family:'Liberation Sans',sans-serif;transform:scaleX(0.9176);transform-origin:0 0;">Error List</span>
<span class="t" style="left:134px;top:1297.56px;font-size:18px;line-height:18px;color:#c4c4c4;font-family:'Liberation Sans',sans-serif;transform:scaleX(1.0549);transform-origin:0 0;">Output</span>
<div style="left:48px;top:1323px;width:68px;height:8px;background:#333333;"></div>
<div style="left:134px;top:1323px;width:57px;height:8px;background:#333333;"></div>
<div style="left:0px;top:1331px;width:2559px;height:39px;background:#434343;"></div>
<svg class="a" style="left:0px;top:1333px;" width="36" height="35" viewBox="0 1333 36 35"><path d="M6.5,1339.5 H29.5 V1357 H17.8 L13.5,1361.3 L9.5,1357 H6.5 Z" stroke="#e6e6e6" stroke-width="1.5" fill="#3b3b3b" stroke-linejoin="round"/></svg>
<span class="t" style="left:42px;top:1341.34px;font-size:18.5px;line-height:18.5px;color:#f4f4f4;font-family:'Liberation Sans',sans-serif;transform:scaleX(0.8976);transform-origin:0 0;">Ready</span>
<svg class="a" style="left:2010px;top:1335px;" width="30" height="30" viewBox="2010 1335 30 30"><path d="M2026.2,1358 V1341 M2018.5,1348.5 L2026.2,1340.7 L2033.9,1348.5" stroke="#e6e6e6" stroke-width="1.5" fill="none"/></svg>
<span class="t" style="left:2048.8px;top:1341.94px;font-size:18.5px;line-height:18.5px;color:#f4f4f4;font-family:'Liberation Sans',sans-serif;transform:scaleX(0.9762);transform-origin:0 0;">Add to Source Control</span>
<svg class="a" style="left:2230px;top:1340px;" width="22" height="20" viewBox="2230 1340 22 20"><path d="M2235.6,1353.3 L2241.5,1347.4 L2247.5,1353.3 Z" fill="#f0f0f0"/></svg>
<svg class="a" style="left:2278px;top:1336px;" width="30" height="28" viewBox="2278 1336 30 28"><path d="M2292.7,1340.2 L2303.4,1350.4 L2292.7,1360.5 L2282,1350.4 Z" fill="#e6e6e6"/><circle cx="2290" cy="1346" r="1.5" fill="#434343"/><circle cx="2295.5" cy="1351" r="1.5" fill="#434343"/><circle cx="2290.5" cy="1355" r="1.5" fill="#434343"/><path d="M2290,1346 L2295.5,1351 M2290.3,1346 V1355" stroke="#434343" stroke-width="1.2"/></svg>
<span class="t" style="left:2314.1px;top:1341.94px;font-size:18.5px;line-height:18.5px;color:#f4f4f4;font-family:'Liberation Sans',sans-serif;transform:scaleX(0.9325);transform-origin:0 0;">Select Repository</span>
<svg class="a" style="left:2454px;top:1340px;" width="22" height="20" viewBox="2454 1340 22 20"><path d="M2459.3,1353.3 L2465,1347.4 L2470.7,1353.3 Z" fill="#f0f0f0"/></svg>
<svg class="a" style="left:2500px;top:1336px;" width="36" height="30" viewBox="2500 1336 36 30"><path d="M2505,1356.5 H2521 M2507,1356.5 V1348.5 Q2507,1340.5 2513,1340.5 Q2519,1340.5 2519,1348.5 V1356.5 M2511,1358.5 Q2513,1361 2515,1358.5" stroke="#dcdcdc" stroke-width="1.4" fill="none"/><circle cx="2524.7" cy="1356.2" r="8" fill="#f28b8b"/></svg>
<span class="t" style="left:2520.4px;top:1349.50px;font-size:15px;line-height:15px;color:#1f1f1f;font-family:'Liberation Sans',sans-serif;transform:scaleX(1.0309);transform-origin:0 0;">2</span>
<div style="left:0px;top:1370px;width:2559px;height:69px;background:#212121;"></div>
<svg class="a" style="left:28px;top:1375px;" width="44" height="50" viewBox="28 1375 44 50"><rect x="38.5" y="1392" width="8" height="21" rx="4" stroke="#8cc8f5" stroke-width="2" fill="#2a4a6a"/><circle cx="42.5" cy="1413" r="5.6" stroke="#8cc8f5" stroke-width="2" fill="#4aa0e8"/><path d="M42.5,1398 V1412" stroke="#e8445a" stroke-width="2.4"/><path d="M55,1409 V1419" stroke="#e8222a" stroke-width="2.6"/><path d="M50.5,1410 L55,1404.5 L59.5,1410 Z" fill="#e8222a"/><circle cx="57.8" cy="1389" r="10.8" fill="#c42b1c"/></svg>
<span class="t" style="left:54.4px;top:1382.80px;font-size:15px;line-height:15px;color:#ffffff;font-family:'Liberation Sans',sans-serif;transform:scaleX(0.8391);transform-origin:0 0;">1</span>
<span class="t" style="left:76.6px;top:1383.09px;font-size:17.5px;line-height:17.5px;color:#ffffff;font-family:'Liberation Sans',sans-serif;transform:scaleX(0.8797);transform-origin:0 0;">17°C</span>
<span class="t" style="left:76.6px;top:1407.09px;font-size:17.5px;line-height:17.5px;color:#f0f0f0;font-family:'Liberation Sans',sans-serif;transform:scaleX(1.0200);transform-origin:0 0;">Sıcaklık tahmini</span>
<svg class="a" style="left:760px;top:1382px;" width="46" height="46" viewBox="760 1382 46 46"><defs><linearGradient id="wg" x1="0" y1="0" x2="1" y2="1"><stop offset="0" stop-color="#6fe3ff"/><stop offset="1" stop-color="#1da0f2"/></linearGradient></defs><rect x="765" y="1386.7" width="17.2" height="17.2" fill="url(#wg)"/><rect x="783.1" y="1386.7" width="17.2" height="17.2" fill="url(#wg)"/><rect x="765" y="1405.2" width="17.2" height="17.2" fill="url(#wg)"/><rect x="783.1" y="1405.2" width="17.2" height="17.2" fill="url(#wg)"/></svg>
<div style="left:822.2px;top:1382.5px;width:325.5px;height:43px;background:#f2f2f2;border-radius:22px;"></div>
<svg class="a" style="left:834px;top:1390px;" width="32" height="30" viewBox="834 1390 32 30"><circle cx="847" cy="1402" r="8.2" stroke="#1f1f1f" stroke-width="2.2" fill="none"/><path d="M853,1408 L859.6,1414.6" stroke="#1f1f1f" stroke-width="2.4" stroke-linecap="round"/></svg>
<span class="t" style="left:876px;top:1395.99px;font-size:19.5px;line-height:19.5px;color:#5f5f5f;font-family:'Liberation Sans',sans-serif;transform:scaleX(0.9873);transform-origin:0 0;">Search</span>
<svg class="a" style="left:1070px;top:1378px;" width="80" height="50" viewBox="1070 1378 80 50"><defs><clipPath id="pill"><rect x="822.2" y="1383.5" width="324.5" height="41" rx="20.5"/></clipPath><linearGradient id="isl" x1="0" y1="0" x2="0" y2="1"><stop offset="0" stop-color="#7cc420"/><stop offset="1" stop-color="#5a9a10"/></linearGradient></defs><g clip-path="url(#pill)"><path d="M1104,1401.5 H1148 V1412 H1104 Z" fill="#5a9ee8"/><path d="M1075,1413 Q1078,1403 1090,1402.5 L1080,1424 Z" fill="#3cb8f0"/><path d="M1074,1416 Q1076,1424 1095,1425 L1085,1410 Z" fill="#2aa8f0"/><path d="M1082,1409 Q1088,1402 1098,1401 Q1106,1403 1112,1410 Q1120,1410 1130,1412 Q1140,1411 1148,1413 V1426 H1096 Q1086,1420 1082,1409 Z" fill="url(#isl)"/><path d="M1085,1412 Q1090,1420 1097,1424 L1104,1426 L1100,1416 Z" fill="#5a5060" opacity="0.8"/><path d="M1117,1412 Q1121,1404.5 1128,1405.5 Q1131,1409 1133,1412 Z" fill="#9a8070"/><path d="M1103,1404 Q1108,1410 1107,1413 Q1104,1417 1107,1418" stroke="#d8f0c8" stroke-width="1" fill="none"/><rect x="1089.5" y="1388.5" width="4" height="13.5" fill="#e8e8f4"/><rect x="1089" y="1387" width="4.5" height="2.5" fill="#d8c050"/><path d="M1093,1398 Q1097,1396.5 1103,1400 H1093 Z" fill="#9acc30"/><circle cx="1121.5" cy="1420" r="2" fill="#f8c820"/><circle cx="1140" cy="1414" r="1.8" fill="#f8c820"/></g></svg>
<svg class="a" style="left:1165px;top:1380px;" width="45" height="48" viewBox="1165 1380 45 48"><defs><linearGradient id="cp1" x1="0" y1="0" x2="0.3" y2="1"><stop offset="0" stop-color="#1f9bf0"/><stop offset="0.6" stop-color="#5fd05a"/><stop offset="1" stop-color="#f5c030"/></linearGradient><linearGradient id="cp2" x1="0" y1="0" x2="1" y2="1"><stop offset="0" stop-color="#f060a0"/><stop offset="1" stop-color="#a050f0"/></linearGradient></defs><path d="M1176,1390 Q1178,1387.5 1182,1387.5 H1192 Q1195,1388 1193,1392 L1186,1408 Q1184.5,1411 1181,1411 H1172 Q1168,1410.5 1169.5,1406 Z" fill="url(#cp1)"/><path d="M1189,1398 Q1190.5,1396 1193,1396 H1200 Q1204,1396.5 1202.5,1400 L1199,1408 Q1197.5,1411 1194,1411 H1186 Q1182.5,1410.5 1184,1407 Z" fill="url(#cp2)"/><rect x="1177" y="1412" width="27" height="10.5" rx="3" fill="#f5b800"/></svg>
<span class="t" style="left:1181.5px;top:1411.91px;font-size:10.5px;line-height:10.5px;color:#1a1a1a;font-family:'Liberation Sans',sans-serif;font-weight:bold;transform:scaleX(0.8337);transform-origin:0 0;">PRE</span>
<svg class="a" style="left:1228px;top:1380px;" width="47" height="48" viewBox="1228 1380 47 48"><defs><linearGradient id="tv1" x1="0" y1="0" x2="0" y2="1"><stop offset="0" stop-color="#8a8a8a"/><stop offset="1" stop-color="#555"/></linearGradient><linearGradient id="tv2" x1="0" y1="0" x2="0" y2="1"><stop offset="0" stop-color="#f5f5f5"/><stop offset="1" stop-color="#d0d0d0"/></linearGradient></defs><rect x="1233.8" y="1396" width="27.2" height="24.6" rx="2" fill="url(#tv1)"/><rect x="1242.8" y="1387" width="27.2" height="25" rx="2" fill="url(#tv2)"/><rect x="1242.8" y="1396" width="18.2" height="16" fill="#a8a8a8" opacity="0.7"/></svg>
<svg class="a" style="left:1295px;top:1380px;" width="43" height="48" viewBox="1295 1380 43 48"><defs><linearGradient id="ol" x1="0" y1="0" x2="1" y2="1"><stop offset="0" stop-color="#f8c040"/><stop offset="1" stop-color="#fff0b0"/></linearGradient></defs><path d="M1303,1386 H1333 V1419 H1300 V1390 Q1300,1386 1303,1386 Z" fill="url(#ol)"/><path d="M1303,1412 L1320,1404 L1333,1412 V1419 H1305 Z" fill="#fff8e0"/><ellipse cx="1312" cy="1400" rx="6.5" ry="9" stroke="#e88a10" stroke-width="4" fill="#ffe0a0"/><circle cx="1328" cy="1401" r="5.5" fill="#fff4c8" stroke="#e8b030" stroke-width="1.2"/><path d="M1327,1398 V1401.5 H1330" stroke="#b07010" stroke-width="1" fill="none"/></svg>
<svg class="a" style="left:1360px;top:1380px;" width="48" height="48" viewBox="1360 1380 48 48"><path d="M1365.6,1388 H1378 L1382,1391.5 H1402 V1420.6 H1365.6 Z" fill="#e8a810"/><rect x="1365.6" y="1393" width="36.4" height="27.6" rx="1.5" fill="#fcd35a"/><path d="M1372,1420.6 V1413 Q1372,1410 1375,1410 H1392.6 Q1395.6,1410 1395.6,1413 V1420.6 Z" fill="#1a8ae0"/><rect x="1377" y="1413.5" width="13.5" height="1.6" fill="#0a5aa0"/></svg>
<svg class="a" style="left:1426px;top:1380px;" width="46" height="48" viewBox="1426 1380 46 48"><defs><clipPath id="apc"><rect x="1434" y="1388.5" width="31" height="31"/></clipPath></defs><rect x="1432" y="1386.5" width="35" height="35" fill="#d8d8d8"/><rect x="1434" y="1388.5" width="31" height="31" fill="#101820"/><g clip-path="url(#apc)"><path d="M1453.1,1406.5 L1459.0,1415.4" stroke="#9ab8e0" stroke-width="1.4"/><path d="M1451.8,1406.7 L1455.9,1416.2" stroke="#9ab8e0" stroke-width="1.4"/><path d="M1450.5,1406.9 L1452.7,1416.8" stroke="#9ab8e0" stroke-width="1.4"/><path d="M1449.2,1407.0 L1449.5,1417.0" stroke="#9ab8e0" stroke-width="1.4"/><path d="M1447.8,1407.0 L1446.2,1416.9" stroke="#9ab8e0" stroke-width="1.4"/><path d="M1446.5,1406.8 L1442.9,1416.4" stroke="#9ab8e0" stroke-width="1.4"/><path d="M1445.2,1406.5 L1439.8,1415.6" stroke="#9ab8e0" stroke-width="1.4"/><path d="M1444.1,1406.2 L1436.9,1414.5" stroke="#9ab8e0" stroke-width="1.4"/><path d="M1443.0,1405.7 L1434.3,1413.2" stroke="#9ab8e0" stroke-width="1.4"/><path d="M1442.1,1405.2 L1432.0,1411.5" stroke="#9ab8e0" stroke-width="1.4"/><path d="M1441.3,1404.6 L1430.1,1409.7" stroke="#9ab8e0" stroke-width="1.4"/><path d="M1440.7,1403.9 L1428.6,1407.7" stroke="#9ab8e0" stroke-width="1.4"/><path d="M1440.3,1403.2 L1427.6,1405.6" stroke="#9ab8e0" stroke-width="1.4"/><path d="M1440.0,1402.4 L1427.1,1403.3" stroke="#9ab8e0" stroke-width="1.4"/><path d="M1440.0,1401.7 L1427.0,1401.1" stroke="#9ab8e0" stroke-width="1.4"/><path d="M1440.2,1400.9 L1427.5,1398.8" stroke="#9ab8e0" stroke-width="1.4"/><path d="M1440.6,1400.2 L1428.4,1396.7" stroke="#9ab8e0" stroke-width="1.4"/><path d="M1441.2,1399.5 L1429.8,1394.6" stroke="#9ab8e0" stroke-width="1.4"/><path d="M1441.9,1398.9 L1431.7,1392.8" stroke="#9ab8e0" stroke-width="1.4"/><path d="M1442.8,1398.4 L1433.9,1391.1" stroke="#9ab8e0" stroke-width="1.4"/><path d="M1443.9,1397.9 L1436.4,1389.7" stroke="#9ab8e0" stroke-width="1.4"/><path d="M1445.0,1397.5 L1439.3,1388.5" stroke="#9ab8e0" stroke-width="1.4"/><path d="M1446.3,1397.2 L1442.3,1387.7" stroke="#9ab8e0" stroke-width="1.4"/><path d="M1447.6,1397.1 L1445.6,1387.2" stroke="#9ab8e0" stroke-width="1.4"/><ellipse cx="1447" cy="1402" rx="8" ry="4.5" fill="#050a10"/><path d="M1452,1390 L1465,1401 M1465,1390 L1452,1401" stroke="#e8e8e8" stroke-width="0.8" opacity="0.8"/></g></svg>
<svg class="a" style="left:1492px;top:1380px;" width="48" height="48" viewBox="1492 1380 48 48"><path d="M1497,1407 L1504,1400 L1511,1407 L1530,1388 L1536,1394 L1511,1420 Z" fill="#2d7de0"/><path d="M1511,1407 L1530,1388 L1536,1394 L1517,1413 Z" fill="#5eb0ff"/></svg>
<svg class="a" style="left:1558px;top:1380px;" width="48" height="48" viewBox="1558 1380 48 48"><rect x="1563.4" y="1386.7" width="36.5" height="35.5" rx="4" fill="#2490f0"/><path d="M1569.5,1393 L1576.5,1414 L1583.5,1393" stroke="#ffffff" stroke-width="1.8" fill="none" stroke-linejoin="round"/><path d="M1584.5,1404 V1398.5 Q1584.5,1395 1588.5,1395 Q1592.5,1395 1592.5,1398.5 V1404" stroke="#ffffff" stroke-width="1.7" fill="none"/><path d="M1592.5,1407.5 H1588.5 Q1584.5,1407.5 1584.5,1411 Q1584.5,1414.5 1588.5,1414.5 H1592.5" stroke="#ffffff" stroke-width="1.7" fill="none"/></svg>
<svg class="a" style="left:1624px;top:1378px;" width="51" height="50" viewBox="1624 1378 51 50"><circle cx="1648.5" cy="1404" r="18.5" fill="#de3a2e"/><path d="M1648.5,1404 L1632.5,1394.8 A18.5,18.5 0 0 0 1648.5,1422.5 Z" fill="#2ea44f"/><path d="M1648.5,1404 L1648.5,1422.5 A18.5,18.5 0 0 0 1664.5,1394.8 Z" fill="#f5c518"/><circle cx="1648.5" cy="1404" r="8.5" fill="#ffffff"/><circle cx="1648.5" cy="1404" r="6.5" fill="#2f7ee8"/><circle cx="1662" cy="1390" r="9.5" fill="#2a1e12"/><circle cx="1664" cy="1387" r="4" fill="#6a5030"/></svg>
<svg class="a" style="left:1690px;top:1380px;" width="46" height="48" viewBox="1690 1380 46 48"><defs><linearGradient id="wd" x1="0" y1="0" x2="1" y2="1"><stop offset="0" stop-color="#f4f8ff"/><stop offset="1" stop-color="#9cc0ec"/></linearGradient></defs><rect x="1696" y="1386.5" width="33" height="34" fill="url(#wd)"/><path d="M1699,1393 L1703,1409 L1707,1397 L1711,1409 L1715,1393" stroke="#1a5ac8" stroke-width="4" fill="none" stroke-linejoin="miter"/><path d="M1712,1418 L1728,1408 L1732,1418 L1716,1424 Z" fill="#ffffff" stroke="#a0b8d8" stroke-width="0.8"/></svg>
<div style="left:1752px;top:1374.3px;width:58px;height:59px;background:#2d2d2d;border-radius:5px;"></div>
<svg class="a" style="left:1758px;top:1380px;" width="46" height="48" viewBox="1758 1380 46 48"><path d="M1761.5,1397 L1768,1393 L1798,1419 L1790,1422.5 Z" fill="#9a70e0"/><path d="M1761.5,1411.5 L1768,1415.5 L1798,1389.5 L1790,1386 Z" fill="#7d55cc"/><path d="M1761.5,1397 L1768,1393 V1415.5 L1761.5,1411.5 Z" fill="#6a45b8"/><path d="M1790,1386 L1798,1389.5 V1419 L1790,1422.5 Z" fill="#b890f8"/></svg>
<div style="left:1768px;top:1428px;width:24.5px;height:4.5px;background:#f5a623;border-radius:2px;"></div>
<div style="left:1379.5px;top:1429.5px;width:9px;height:4px;background:#8a8a8a;border-radius:2px;"></div>
<div style="left:1445.5px;top:1429.5px;width:9px;height:4px;background:#8a8a8a;border-radius:2px;"></div>
<div style="left:1511.5px;top:1429.5px;width:9px;height:4px;background:#8a8a8a;border-radius:2px;"></div>
<div style="left:1577.5px;top:1429.5px;width:9px;height:4px;background:#8a8a8a;border-radius:2px;"></div>
<div style="left:1643.5px;top:1429.5px;width:9px;height:4px;background:#8a8a8a;border-radius:2px;"></div>
<div style="left:1709.5px;top:1429.5px;width:9px;height:4px;background:#8a8a8a;border-radius:2px;"></div>
<svg class="a" style="left:2165px;top:1392px;" width="30" height="22" viewBox="2165 1392 30 22"><path d="M2171.5,1408 L2179,1400.2 L2186.5,1408" stroke="#f0f0f0" stroke-width="1.6" fill="none"/></svg>
<span class="t" style="left:2219px;top:1396.01px;font-size:17px;line-height:17px;color:#f4f4f4;font-family:'Liberation Sans',sans-serif;transform:scaleX(0.9148);transform-origin:0 0;">ENG</span>
<svg class="a" style="left:2276px;top:1388px;" width="108" height="30" viewBox="2276 1388 108 30"><path d="M2281.5,1400.5 Q2292.7,1390 2304,1400.5" stroke="#f0f0f0" stroke-width="1.8" fill="none"/><path d="M2285,1404 Q2292.7,1397 2300.5,1404" stroke="#f0f0f0" stroke-width="1.8" fill="none"/><path d="M2288.5,1407.5 Q2292.7,1404 2297,1407.5" stroke="#f0f0f0" stroke-width="1.8" fill="none"/><circle cx="2292.7" cy="1410.5" r="1.6" fill="#f0f0f0"/><path d="M2317.5,1399.5 H2321.5 L2327,1395 V1412 L2321.5,1407.5 H2317.5 Z" stroke="#f0f0f0" stroke-width="1.6" fill="none" stroke-linejoin="round"/><path d="M2330.5,1400 Q2333,1403.5 2330.5,1407 M2334,1397 Q2338.5,1403.5 2334,1410 M2337.5,1395 Q2343,1403.5 2337.5,1412" stroke="#f0f0f0" stroke-width="1.5" fill="none"/><rect x="2353" y="1398" width="21" height="12.5" rx="2" stroke="#f0f0f0" stroke-width="1.6" fill="none"/><rect x="2374.5" y="1401.5" width="2.5" height="5.5" fill="#f0f0f0"/><rect x="2355.5" y="1400.5" width="16" height="7.5" fill="#f0f0f0"/><path d="M2358,1392.6 L2354,1399 H2358 L2355.5,1404" stroke="#1c1c1c" stroke-width="3.5" fill="none"/><path d="M2358,1392.6 L2354,1399 H2358 L2355.5,1404" stroke="#f0f0f0" stroke-width="1.4" fill="none"/></svg>
<span class="t" style="left:2452.1px;top:1383.79px;font-size:17.5px;line-height:17.5px;color:#f4f4f4;font-family:'Liberation Sans',sans-serif;transform:scaleX(0.9813);transform-origin:0 0;">11:05</span>
<span class="t" style="left:2402.2px;top:1407.99px;font-size:17.5px;line-height:17.5px;color:#f4f4f4;font-family:'Liberation Sans',sans-serif;transform:scaleX(1.0458);transform-origin:0 0;">29/03/2024</span>
<svg class="a" style="left:2502px;top:1390px;" width="32" height="28" viewBox="2502 1390 32 28"><path d="M2508.5,1410 H2527.5 M2510.8,1410 V1402 Q2510.8,1394 2518,1394 Q2525.2,1394 2525.2,1402 V1410 M2515.5,1412.5 Q2518,1415.5 2520.5,1412.5" stroke="#f0f0f0" stroke-width="1.6" fill="none"/></svg>
<div style="left:48px;top:179px;width:2435px;height:1077px;overflow:hidden;position:absolute">
<div style="position:absolute;left:143.2px;top:0px;width:1.9px;height:67.69999999999999px;background:#a8a8a8;"></div>
<div style="position:absolute;left:143.2px;top:79.80000000000001px;width:1.9px;height:997.2px;background:#a8a8a8;"></div>
<div style="position:absolute;left:137.4px;top:67.9px;width:11.4px;height:11.6px;background:transparent;box-sizing:border-box;border:1.3px solid #b4b4b4;"></div>
<div style="position:absolute;left:140.2px;top:73.19999999999999px;width:6px;height:1.6px;background:#eeeeee;"></div>
<div style="position:absolute;left:144.5px;top:106.60000000000002px;width:4.8px;height:1.3px;background:#a8a8a8;"></div>
<div style="position:absolute;left:154.6px;top:0px;width:1.3px;height:1077px;background:repeating-linear-gradient(to bottom, #6e6e6e 0px, #6e6e6e 3.6px, transparent 3.6px, transparent 8.03px);background-position:0 2.2px;"></div>
<div style="position:absolute;left:196.65px;top:0px;width:1.3px;height:1077px;background:repeating-linear-gradient(to bottom, #6e6e6e 0px, #6e6e6e 3.6px, transparent 3.6px, transparent 8.03px);background-position:0 2.2px;"></div>
<div style="position:absolute;left:236.64999999999998px;top:0px;width:1.3px;height:1077px;background:repeating-linear-gradient(to bottom, #6e6e6e 0px, #6e6e6e 3.6px, transparent 3.6px, transparent 8.03px);background-position:0 2.2px;"></div>
<div style="position:absolute;left:277.5px;top:0px;width:1.3px;height:1077px;background:repeating-linear-gradient(to bottom, #6e6e6e 0px, #6e6e6e 3.6px, transparent 3.6px, transparent 8.03px);background-position:0 2.2px;"></div>
<div style="position:absolute;left:317.5px;top:0px;width:1.3px;height:1077px;background:repeating-linear-gradient(to bottom, #6e6e6e 0px, #6e6e6e 3.6px, transparent 3.6px, transparent 8.03px);background-position:0 2.2px;"></div>
<span class="t" style="left:69.035px;top:-1.29px;font-size:17.6px;line-height:17.6px;color:#2b91af;font-family:'Liberation Mono',monospace;transform:scaleX(0.9616);transform-origin:0 0;-webkit-text-stroke:0.3px;">287</span>
<span class="t" style="left:69.035px;top:21.41px;font-size:17.6px;line-height:17.6px;color:#2b91af;font-family:'Liberation Mono',monospace;transform:scaleX(0.9616);transform-origin:0 0;-webkit-text-stroke:0.3px;">288</span>
<span class="t" style="left:69.035px;top:44.11px;font-size:17.6px;line-height:17.6px;color:#2b91af;font-family:'Liberation Mono',monospace;transform:scaleX(0.9616);transform-origin:0 0;-webkit-text-stroke:0.3px;">289</span>
<span class="t" style="left:69.035px;top:66.81px;font-size:17.6px;line-height:17.6px;color:#2b91af;font-family:'Liberation Mono',monospace;transform:scaleX(0.9616);transform-origin:0 0;-webkit-text-stroke:0.3px;">290</span>
<div class="t" style="left:355.10px;top:65.81px;font-family:'Liberation Mono',monospace;font-size:17.6px;line-height:17.6px;white-space:pre;-webkit-text-stroke:0.3px;transform:scaleX(0.9616);transform-origin:0 0"><span style="color:#608b4e">///</span><span style="color:#608b4e">intigers vairables</span></div>
<span class="t" style="left:69.035px;top:89.51px;font-size:17.6px;line-height:17.6px;color:#2b91af;font-family:'Liberation Mono',monospace;transform:scaleX(0.9616);transform-origin:0 0;-webkit-text-stroke:0.3px;">291</span>
<div class="t" style="left:355.10px;top:88.51px;font-family:'Liberation Mono',monospace;font-size:17.6px;line-height:17.6px;white-space:pre;-webkit-text-stroke:0.3px;transform:scaleX(0.9616);transform-origin:0 0"><span style="color:#608b4e">///</span><span style="color:#608b4e">Parameter Set</span></div>
<span class="t" style="left:69.035px;top:112.21px;font-size:17.6px;line-height:17.6px;color:#2b91af;font-family:'Liberation Mono',monospace;transform:scaleX(0.9616);transform-origin:0 0;-webkit-text-stroke:0.3px;">292</span>
<div class="t" style="left:355.10px;top:111.21px;font-family:'Liberation Mono',monospace;font-size:17.6px;line-height:17.6px;white-space:pre;-webkit-text-stroke:0.3px;transform:scaleX(0.9616);transform-origin:0 0"><span style="color:#9cdcfe">RecordP_Werkzeugn</span><span style="color:#b4b4b4">         = </span><span style="color:#dcdcdc">S7</span><span style="color:#b4b4b4">.</span><span style="color:#dcdcdc">Net</span><span style="color:#b4b4b4">.</span><span style="color:#dcdcdc">Types</span><span style="color:#b4b4b4">.</span><span style="color:#4ec9b0">Int</span><span style="color:#b4b4b4">.</span><span style="color:#dcdcaa">FromByteArray</span><span style="color:#dcdcdc">(</span><span style="color:#9cdcfe">RecordBytes</span><span style="color:#b4b4b4">.</span><span style="color:#dcdcaa">Skip</span><span style="color:#dcdcdc">(</span><span style="color:#b5cea8">180</span><span style="color:#dcdcdc">)</span><span style="color:#b4b4b4">.</span><span style="color:#dcdcaa">Take</span><span style="color:#dcdcdc">(</span><span style="color:#b5cea8">2</span><span style="color:#dcdcdc">)</span><span style="color:#b4b4b4">.</span><span style="color:#dcdcaa">ToArray</span><span style="color:#dcdcdc">());</span></div>
<span class="t" style="left:69.035px;top:134.91px;font-size:17.6px;line-height:17.6px;color:#2b91af;font-family:'Liberation Mono',monospace;transform:scaleX(0.9616);transform-origin:0 0;-webkit-text-stroke:0.3px;">293</span>
<div class="t" style="left:355.10px;top:133.91px;font-family:'Liberation Mono',monospace;font-size:17.6px;line-height:17.6px;white-space:pre;-webkit-text-stroke:0.3px;transform:scaleX(0.9616);transform-origin:0 0"><span style="color:#9cdcfe">RecordP_Rundendurchmesser</span><span style="color:#b4b4b4"> = </span><span style="color:#dcdcdc">S7</span><span style="color:#b4b4b4">.</span><span style="color:#dcdcdc">Net</span><span style="color:#b4b4b4">.</span><span style="color:#dcdcdc">Types</span><span style="color:#b4b4b4">.</span><span style="color:#4ec9b0">Int</span><span style="color:#b4b4b4">.</span><span style="color:#dcdcaa">FromByteArray</span><span style="color:#dcdcdc">(</span><span style="color:#9cdcfe">RecordBytes</span><span style="color:#b4b4b4">.</span><span style="color:#dcdcaa">Skip</span><span style="color:#dcdcdc">(</span><span style="color:#b5cea8">182</span><span style="color:#dcdcdc">)</span><span style="color:#b4b4b4">.</span><span style="color:#dcdcaa">Take</span><span style="color:#dcdcdc">(</span><span style="color:#b5cea8">2</span><span style="color:#dcdcdc">)</span><span style="color:#b4b4b4">.</span><span style="color:#dcdcaa">ToArray</span><span style="color:#dcdcdc">());</span></div>
<span class="t" style="left:69.035px;top:157.61px;font-size:17.6px;line-height:17.6px;color:#2b91af;font-family:'Liberation Mono',monospace;transform:scaleX(0.9616);transform-origin:0 0;-webkit-text-stroke:0.3px;">294</span>
<div class="t" style="left:355.10px;top:156.61px;font-family:'Liberation Mono',monospace;font-size:17.6px;line-height:17.6px;white-space:pre;-webkit-text-stroke:0.3px;transform:scaleX(0.9616);transform-origin:0 0"><span style="color:#9cdcfe">RecordP_Blechdicke</span><span style="color:#b4b4b4">        = </span><span style="color:#dcdcdc">S7</span><span style="color:#b4b4b4">.</span><span style="color:#dcdcdc">Net</span><span style="color:#b4b4b4">.</span><span style="color:#dcdcdc">Types</span><span style="color:#b4b4b4">.</span><span style="color:#4ec9b0">Int</span><span style="color:#b4b4b4">.</span><span style="color:#dcdcaa">FromByteArray</span><span style="color:#dcdcdc">(</span><span style="color:#9cdcfe">RecordBytes</span><span style="color:#b4b4b4">.</span><span style="color:#dcdcaa">Skip</span><span style="color:#dcdcdc">(</span><span style="color:#b5cea8">184</span><span style="color:#dcdcdc">)</span><span style="color:#b4b4b4">.</span><span style="color:#dcdcaa">Take</span><span style="color:#dcdcdc">(</span><span style="color:#b5cea8">2</span><span style="color:#dcdcdc">)</span><span style="color:#b4b4b4">.</span><span style="color:#dcdcaa">ToArray</span><span style="color:#dcdcdc">());</span></div>
<span class="t" style="left:69.035px;top:180.31px;font-size:17.6px;line-height:17.6px;color:#2b91af;font-family:'Liberation Mono',monospace;transform:scaleX(0.9616);transform-origin:0 0;-webkit-text-stroke:0.3px;">295</span>
<div class="t" style="left:355.10px;top:179.31px;font-family:'Liberation Mono',monospace;font-size:17.6px;line-height:17.6px;white-space:pre;-webkit-text-stroke:0.3px;transform:scaleX(0.9616);transform-origin:0 0"><span style="color:#9cdcfe">RecordP_Kumpelradius</span><span style="color:#b4b4b4">      = </span><span style="color:#dcdcdc">S7</span><span style="color:#b4b4b4">.</span><span style="color:#dcdcdc">Net</span><span style="color:#b4b4b4">.</span><span style="color:#dcdcdc">Types</span><span style="color:#b4b4b4">.</span><span style="color:#4ec9b0">Int</span><span style="color:#b4b4b4">.</span><span style="color:#dcdcaa">FromByteArray</span><span style="color:#dcdcdc">(</span><span style="color:#9cdcfe">RecordBytes</span><span style="color:#b4b4b4">.</span><span style="color:#dcdcaa">Skip</span><span style="color:#dcdcdc">(</span><span style="color:#b5cea8">186</span><span style="color:#dcdcdc">)</span><span style="color:#b4b4b4">.</span><span style="color:#dcdcaa">Take</span><span style="color:#dcdcdc">(</span><span style="color:#b5cea8">2</span><span style="color:#dcdcdc">)</span><span style="color:#b4b4b4">.</span><span style="color:#dcdcaa">ToArray</span><span style="color:#dcdcdc">());</span></div>
<span class="t" style="left:69.035px;top:203.01px;font-size:17.6px;line-height:17.6px;color:#2b91af;font-family:'Liberation Mono',monospace;transform:scaleX(0.9616);transform-origin:0 0;-webkit-text-stroke:0.3px;">296</span>
<span class="t" style="left:69.035px;top:225.71px;font-size:17.6px;line-height:17.6px;color:#2b91af;font-family:'Liberation Mono',monospace;transform:scaleX(0.9616);transform-origin:0 0;-webkit-text-stroke:0.3px;">297</span>
<div class="t" style="left:355.10px;top:224.71px;font-family:'Liberation Mono',monospace;font-size:17.6px;line-height:17.6px;white-space:pre;-webkit-text-stroke:0.3px;transform:scaleX(0.9616);transform-origin:0 0"><span style="color:#57a64a">//// First Package Registers</span></div>
<span class="t" style="left:69.035px;top:248.41px;font-size:17.6px;line-height:17.6px;color:#2b91af;font-family:'Liberation Mono',monospace;transform:scaleX(0.9616);transform-origin:0 0;-webkit-text-stroke:0.3px;">298</span>
<div class="t" style="left:355.10px;top:247.41px;font-family:'Liberation Mono',monospace;font-size:17.6px;line-height:17.6px;white-space:pre;-webkit-text-stroke:0.3px;transform:scaleX(0.9616);transform-origin:0 0"><span style="color:#9cdcfe">RE_DataSetNo_1</span><span style="color:#b4b4b4"> = </span><span style="color:#dcdcdc">S7</span><span style="color:#b4b4b4">.</span><span style="color:#dcdcdc">Net</span><span style="color:#b4b4b4">.</span><span style="color:#dcdcdc">Types</span><span style="color:#b4b4b4">.</span><span style="color:#4ec9b0">Int</span><span style="color:#b4b4b4">.</span><span style="color:#dcdcaa">FromByteArray</span><span style="color:#dcdcdc">(</span><span style="color:#9cdcfe">RecordBytes</span><span style="color:#b4b4b4">.</span><span style="color:#dcdcaa">Skip</span><span style="color:#dcdcdc">(</span><span style="color:#b5cea8">202</span><span style="color:#dcdcdc">)</span><span style="color:#b4b4b4">.</span><span style="color:#dcdcaa">Take</span><span style="color:#dcdcdc">(</span><span style="color:#b5cea8">2</span><span style="color:#dcdcdc">)</span><span style="color:#b4b4b4">.</span><span style="color:#dcdcaa">ToArray</span><span style="color:#dcdcdc">());</span></div>
<span class="t" style="left:69.035px;top:271.11px;font-size:17.6px;line-height:17.6px;color:#2b91af;font-family:'Liberation Mono',monospace;transform:scaleX(0.9616);transform-origin:0 0;-webkit-text-stroke:0.3px;">299</span>
<div class="t" style="left:395.72px;top:270.11px;font-family:'Liberation Mono',monospace;font-size:17.6px;line-height:17.6px;white-space:pre;-webkit-text-stroke:0.3px;transform:scaleX(0.9616);transform-origin:0 0"><span style="color:#9cdcfe">RE_PreslemeBasinci_1</span><span style="color:#b4b4b4">    = </span><span style="color:#dcdcdc">S7</span><span style="color:#b4b4b4">.</span><span style="color:#dcdcdc">Net</span><span style="color:#b4b4b4">.</span><span style="color:#dcdcdc">Types</span><span style="color:#b4b4b4">.</span><span style="color:#4ec9b0">Int</span><span style="color:#b4b4b4">.</span><span style="color:#dcdcaa">FromByteArray</span><span style="color:#dcdcdc">(</span><span style="color:#9cdcfe">RecordBytes</span><span style="color:#b4b4b4">.</span><span style="color:#dcdcaa">Skip</span><span style="color:#dcdcdc">(</span><span style="color:#b5cea8">206</span><span style="color:#dcdcdc">)</span><span style="color:#b4b4b4">.</span><span style="color:#dcdcaa">Take</span><span style="color:#dcdcdc">(</span><span style="color:#b5cea8">2</span><span style="color:#dcdcdc">)</span><span style="color:#b4b4b4">.</span><span style="color:#dcdcaa">ToArray</span><span style="color:#dcdcdc">());</span></div>
<span class="t" style="left:69.035px;top:293.81px;font-size:17.6px;line-height:17.6px;color:#2b91af;font-family:'Liberation Mono',monospace;transform:scaleX(0.9616);transform-origin:0 0;-webkit-text-stroke:0.3px;">300</span>
<div class="t" style="left:395.72px;top:292.81px;font-family:'Liberation Mono',monospace;font-size:17.6px;line-height:17.6px;white-space:pre;-webkit-text-stroke:0.3px;transform:scaleX(0.9616);transform-origin:0 0"><span style="color:#9cdcfe">RE_PresYukselmeSuresi_1</span><span style="color:#b4b4b4"> = </span><span style="color:#dcdcdc">S7</span><span style="color:#b4b4b4">.</span><span style="color:#dcdcdc">Net</span><span style="color:#b4b4b4">.</span><span style="color:#dcdcdc">Types</span><span style="color:#b4b4b4">.</span><span style="color:#4ec9b0">Int</span><span style="color:#b4b4b4">.</span><span style="color:#dcdcaa">FromByteArray</span><span style="color:#dcdcdc">(</span><span style="color:#9cdcfe">RecordBytes</span><span style="color:#b4b4b4">.</span><span style="color:#dcdcaa">Skip</span><span style="color:#dcdcdc">(</span><span style="color:#b5cea8">208</span><span style="color:#dcdcdc">)</span><span style="color:#b4b4b4">.</span><span style="color:#dcdcaa">Take</span><span style="color:#dcdcdc">(</span><span style="color:#b5cea8">2</span><span style="color:#dcdcdc">)</span><span style="color:#b4b4b4">.</span><span style="color:#dcdcaa">ToArray</span><span style="color:#dcdcdc">());</span></div>
<span class="t" style="left:69.035px;top:316.51px;font-size:17.6px;line-height:17.6px;color:#2b91af;font-family:'Liberation Mono',monospace;transform:scaleX(0.9616);transform-origin:0 0;-webkit-text-stroke:0.3px;">301</span>
<div class="t" style="left:395.72px;top:315.51px;font-family:'Liberation Mono',monospace;font-size:17.6px;line-height:17.6px;white-space:pre;-webkit-text-stroke:0.3px;transform:scaleX(0.9616);transform-origin:0 0"><span style="color:#9cdcfe">RE_SolsagRol_AltDurus_1</span><span style="color:#b4b4b4"> = </span><span style="color:#dcdcdc">S7</span><span style="color:#b4b4b4">.</span><span style="color:#dcdcdc">Net</span><span style="color:#b4b4b4">.</span><span style="color:#dcdcdc">Types</span><span style="color:#b4b4b4">.</span><span style="color:#4ec9b0">Int</span><span style="color:#b4b4b4">.</span><span style="color:#dcdcaa">FromByteArray</span><span style="color:#dcdcdc">(</span><span style="color:#9cdcfe">RecordBytes</span><span style="color:#b4b4b4">.</span><span style="color:#dcdcaa">Skip</span><span style="color:#dcdcdc">(</span><span style="color:#b5cea8">210</span><span style="color:#dcdcdc">)</span><span style="color:#b4b4b4">.</span><span style="color:#dcdcaa">Take</span><span style="color:#dcdcdc">(</span><span style="color:#b5cea8">2</span><span style="color:#dcdcdc">)</span><span style="color:#b4b4b4">.</span><span style="color:#dcdcaa">ToArray</span><span style="color:#dcdcdc">());</span></div>
<span class="t" style="left:69.035px;top:339.21px;font-size:17.6px;line-height:17.6px;color:#2b91af;font-family:'Liberation Mono',monospace;transform:scaleX(0.9616);transform-origin:0 0;-webkit-text-stroke:0.3px;">302</span>
<div class="t" style="left:395.72px;top:338.21px;font-family:'Liberation Mono',monospace;font-size:17.6px;line-height:17.6px;white-space:pre;-webkit-text-stroke:0.3px;transform:scaleX(0.9616);transform-origin:0 0"><span style="color:#9cdcfe">RE_SolSagRol_YukSet_1</span><span style="color:#b4b4b4">   = </span><span style="color:#dcdcdc">S7</span><span style="color:#b4b4b4">.</span><span style="color:#dcdcdc">Net</span><span style="color:#b4b4b4">.</span><span style="color:#dcdcdc">Types</span><span style="color:#b4b4b4">.</span><span style="color:#4ec9b0">Int</span><span style="color:#b4b4b4">.</span><span style="color:#dcdcaa">FromByteArray</span><span style="color:#dcdcdc">(</span><span style="color:#9cdcfe">RecordBytes</span><span style="color:#b4b4b4">.</span><span style="color:#dcdcaa">Skip</span><span style="color:#dcdcdc">(</span><span style="color:#b5cea8">212</span><span style="color:#dcdcdc">)</span><span style="color:#b4b4b4">.</span><span style="color:#dcdcaa">Take</span><span style="color:#dcdcdc">(</span><span style="color:#b5cea8">2</span><span style="color:#dcdcdc">)</span><span style="color:#b4b4b4">.</span><span style="color:#dcdcaa">ToArray</span><span style="color:#dcdcdc">());</span></div>
<span class="t" style="left:69.035px;top:361.91px;font-size:17.6px;line-height:17.6px;color:#2b91af;font-family:'Liberation Mono',monospace;transform:scaleX(0.9616);transform-origin:0 0;-webkit-text-stroke:0.3px;">303</span>
<div class="t" style="left:395.72px;top:360.91px;font-family:'Liberation Mono',monospace;font-size:17.6px;line-height:17.6px;white-space:pre;-webkit-text-stroke:0.3px;transform:scaleX(0.9616);transform-origin:0 0"><span style="color:#9cdcfe">RE_RolDonmeSetdegeri_1</span><span style="color:#b4b4b4">  = </span><span style="color:#dcdcdc">S7</span><span style="color:#b4b4b4">.</span><span style="color:#dcdcdc">Net</span><span style="color:#b4b4b4">.</span><span style="color:#dcdcdc">Types</span><span style="color:#b4b4b4">.</span><span style="color:#4ec9b0">Int</span><span style="color:#b4b4b4">.</span><span style="color:#dcdcaa">FromByteArray</span><span style="color:#dcdcdc">(</span><span style="color:#9cdcfe">RecordBytes</span><span style="color:#b4b4b4">.</span><span style="color:#dcdcaa">Skip</span><span style="color:#dcdcdc">(</span><span style="color:#b5cea8">214</span><span style="color:#dcdcdc">)</span><span style="color:#b4b4b4">.</span><span style="color:#dcdcaa">Take</span><span style="color:#dcdcdc">(</span><span style="color:#b5cea8">2</span><span style="color:#dcdcdc">)</span><span style="color:#b4b4b4">.</span><span style="color:#dcdcaa">ToArray</span><span style="color:#dcdcdc">());</span></div>
<span class="t" style="left:69.035px;top:384.61px;font-size:17.6px;line-height:17.6px;color:#2b91af;font-family:'Liberation Mono',monospace;transform:scaleX(0.9616);transform-origin:0 0;-webkit-text-stroke:0.3px;">304</span>
<div class="t" style="left:395.72px;top:383.61px;font-family:'Liberation Mono',monospace;font-size:17.6px;line-height:17.6px;white-space:pre;-webkit-text-stroke:0.3px;transform:scaleX(0.9616);transform-origin:0 0"><span style="color:#9cdcfe">RE_Manipulator_Poz_1</span><span style="color:#b4b4b4">    = </span><span style="color:#dcdcdc">S7</span><span style="color:#b4b4b4">.</span><span style="color:#dcdcdc">Net</span><span style="color:#b4b4b4">.</span><span style="color:#dcdcdc">Types</span><span style="color:#b4b4b4">.</span><span style="color:#4ec9b0">Int</span><span style="color:#b4b4b4">.</span><span style="color:#dcdcaa">FromByteArray</span><span style="color:#dcdcdc">(</span><span style="color:#9cdcfe">RecordBytes</span><span style="color:#b4b4b4">.</span><span style="color:#dcdcaa">Skip</span><span style="color:#dcdcdc">(</span><span style="color:#b5cea8">216</span><span style="color:#dcdcdc">)</span><span style="color:#b4b4b4">.</span><span style="color:#dcdcaa">Take</span><span style="color:#dcdcdc">(</span><span style="color:#b5cea8">2</span><span style="color:#dcdcdc">)</span><span style="color:#b4b4b4">.</span><span style="color:#dcdcaa">ToArray</span><span style="color:#dcdcdc">());</span></div>
<span class="t" style="left:69.035px;top:407.31px;font-size:17.6px;line-height:17.6px;color:#2b91af;font-family:'Liberation Mono',monospace;transform:scaleX(0.9616);transform-origin:0 0;-webkit-text-stroke:0.3px;">305</span>
<div class="t" style="left:395.72px;top:406.31px;font-family:'Liberation Mono',monospace;font-size:17.6px;line-height:17.6px;white-space:pre;-webkit-text-stroke:0.3px;transform:scaleX(0.9616);transform-origin:0 0"><span style="color:#9cdcfe">RE_Schwen_KolAcisi_1</span><span style="color:#b4b4b4">    = </span><span style="color:#dcdcdc">S7</span><span style="color:#b4b4b4">.</span><span style="color:#dcdcdc">Net</span><span style="color:#b4b4b4">.</span><span style="color:#dcdcdc">Types</span><span style="color:#b4b4b4">.</span><span style="color:#4ec9b0">Int</span><span style="color:#b4b4b4">.</span><span style="color:#dcdcaa">FromByteArray</span><span style="color:#dcdcdc">(</span><span style="color:#9cdcfe">RecordBytes</span><span style="color:#b4b4b4">.</span><span style="color:#dcdcaa">Skip</span><span style="color:#dcdcdc">(</span><span style="color:#b5cea8">220</span><span style="color:#dcdcdc">)</span><span style="color:#b4b4b4">.</span><span style="color:#dcdcaa">Take</span><span style="color:#dcdcdc">(</span><span style="color:#b5cea8">2</span><span style="color:#dcdcdc">)</span><span style="color:#b4b4b4">.</span><span style="color:#dcdcaa">ToArray</span><span style="color:#dcdcdc">());</span></div>
<span class="t" style="left:69.035px;top:430.01px;font-size:17.6px;line-height:17.6px;color:#2b91af;font-family:'Liberation Mono',monospace;transform:scaleX(0.9616);transform-origin:0 0;-webkit-text-stroke:0.3px;">306</span>
<div class="t" style="left:395.72px;top:429.01px;font-family:'Liberation Mono',monospace;font-size:17.6px;line-height:17.6px;white-space:pre;-webkit-text-stroke:0.3px;transform:scaleX(0.9616);transform-origin:0 0"><span style="color:#9cdcfe">RE_SolSagRol_Yuk_Set_1</span><span style="color:#b4b4b4">  = </span><span style="color:#dcdcdc">S7</span><span style="color:#b4b4b4">.</span><span style="color:#dcdcdc">Net</span><span style="color:#b4b4b4">.</span><span style="color:#dcdcdc">Types</span><span style="color:#b4b4b4">.</span><span style="color:#4ec9b0">Int</span><span style="color:#b4b4b4">.</span><span style="color:#dcdcaa">FromByteArray</span><span style="color:#dcdcdc">(</span><span style="color:#9cdcfe">RecordBytes</span><span style="color:#b4b4b4">.</span><span style="color:#dcdcaa">Skip</span><span style="color:#dcdcdc">(</span><span style="color:#b5cea8">224</span><span style="color:#dcdcdc">)</span><span style="color:#b4b4b4">.</span><span style="color:#dcdcaa">Take</span><span style="color:#dcdcdc">(</span><span style="color:#b5cea8">2</span><span style="color:#dcdcdc">)</span><span style="color:#b4b4b4">.</span><span style="color:#dcdcaa">ToArray</span><span style="color:#dcdcdc">());</span></div>
<span class="t" style="left:69.035px;top:452.71px;font-size:17.6px;line-height:17.6px;color:#2b91af;font-family:'Liberation Mono',monospace;transform:scaleX(0.9616);transform-origin:0 0;-webkit-text-stroke:0.3px;">307</span>
<div class="t" style="left:395.72px;top:451.71px;font-family:'Liberation Mono',monospace;font-size:17.6px;line-height:17.6px;white-space:pre;-webkit-text-stroke:0.3px;transform:scaleX(0.9616);transform-origin:0 0"><span style="color:#9cdcfe">RE_Ekipman_SW_1</span><span style="color:#b4b4b4">         = </span><span style="color:#dcdcdc">S7</span><span style="color:#b4b4b4">.</span><span style="color:#dcdcdc">Net</span><span style="color:#b4b4b4">.</span><span style="color:#dcdcdc">Types</span><span style="color:#b4b4b4">.</span><span style="color:#4ec9b0">Int</span><span style="color:#b4b4b4">.</span><span style="color:#dcdcaa">FromByteArray</span><span style="color:#dcdcdc">(</span><span style="color:#9cdcfe">RecordBytes</span><span style="color:#b4b4b4">.</span><span style="color:#dcdcaa">Skip</span><span style="color:#dcdcdc">(</span><span style="color:#b5cea8">236</span><span style="color:#dcdcdc">)</span><span style="color:#b4b4b4">.</span><span style="color:#dcdcaa">Take</span><span style="color:#dcdcdc">(</span><span style="color:#b5cea8">2</span><span style="color:#dcdcdc">)</span><span style="color:#b4b4b4">.</span><span style="color:#dcdcaa">ToArray</span><span style="color:#dcdcdc">());</span></div>
<span class="t" style="left:69.035px;top:475.41px;font-size:17.6px;line-height:17.6px;color:#2b91af;font-family:'Liberation Mono',monospace;transform:scaleX(0.9616);transform-origin:0 0;-webkit-text-stroke:0.3px;">308</span>
<span class="t" style="left:69.035px;top:498.11px;font-size:17.6px;line-height:17.6px;color:#2b91af;font-family:'Liberation Mono',monospace;transform:scaleX(0.9616);transform-origin:0 0;-webkit-text-stroke:0.3px;">309</span>
<span class="t" style="left:69.035px;top:520.81px;font-size:17.6px;line-height:17.6px;color:#2b91af;font-family:'Liberation Mono',monospace;transform:scaleX(0.9616);transform-origin:0 0;-webkit-text-stroke:0.3px;">310</span>
<div class="t" style="left:395.72px;top:519.81px;font-family:'Liberation Mono',monospace;font-size:17.6px;line-height:17.6px;white-space:pre;-webkit-text-stroke:0.3px;transform:scaleX(0.9616);transform-origin:0 0"><span style="color:#57a64a">//// Second  Package Registers</span></div>
<span class="t" style="left:69.035px;top:543.51px;font-size:17.6px;line-height:17.6px;color:#2b91af;font-family:'Liberation Mono',monospace;transform:scaleX(0.9616);transform-origin:0 0;-webkit-text-stroke:0.3px;">311</span>
<div class="t" style="left:395.72px;top:542.51px;font-family:'Liberation Mono',monospace;font-size:17.6px;line-height:17.6px;white-space:pre;-webkit-text-stroke:0.3px;transform:scaleX(0.9616);transform-origin:0 0"><span style="color:#9cdcfe">RE_DataSetNo_2</span><span style="color:#b4b4b4">          = </span><span style="color:#dcdcdc">S7</span><span style="color:#b4b4b4">.</span><span style="color:#dcdcdc">Net</span><span style="color:#b4b4b4">.</span><span style="color:#dcdcdc">Types</span><span style="color:#b4b4b4">.</span><span style="color:#4ec9b0">Word</span><span style="color:#b4b4b4">.</span><span style="color:#dcdcaa">FromByteArray</span><span style="color:#dcdcdc">(</span><span style="color:#9cdcfe">RecordBytes</span><span style="color:#b4b4b4">.</span><span style="color:#dcdcaa">Skip</span><span style="color:#dcdcdc">(</span><span style="color:#b5cea8">262</span><span style="color:#dcdcdc">)</span><span style="color:#b4b4b4">.</span><span style="color:#dcdcaa">Take</span><span style="color:#dcdcdc">(</span><span style="color:#b5cea8">2</span><span style="color:#dcdcdc">)</span><span style="color:#b4b4b4">.</span><span style="color:#dcdcaa">ToArray</span><span style="color:#dcdcdc">());</span></div>
<span class="t" style="left:69.035px;top:566.21px;font-size:17.6px;line-height:17.6px;color:#2b91af;font-family:'Liberation Mono',monospace;transform:scaleX(0.9616);transform-origin:0 0;-webkit-text-stroke:0.3px;">312</span>
<div class="t" style="left:395.72px;top:565.21px;font-family:'Liberation Mono',monospace;font-size:17.6px;line-height:17.6px;white-space:pre;-webkit-text-stroke:0.3px;transform:scaleX(0.9616);transform-origin:0 0"><span style="color:#9cdcfe">RE_PreslemeBasinci_2</span><span style="color:#b4b4b4">    = </span><span style="color:#dcdcdc">S7</span><span style="color:#b4b4b4">.</span><span style="color:#dcdcdc">Net</span><span style="color:#b4b4b4">.</span><span style="color:#dcdcdc">Types</span><span style="color:#b4b4b4">.</span><span style="color:#4ec9b0">Word</span><span style="color:#b4b4b4">.</span><span style="color:#dcdcaa">FromByteArray</span><span style="color:#dcdcdc">(</span><span style="color:#9cdcfe">RecordBytes</span><span style="color:#b4b4b4">.</span><span style="color:#dcdcaa">Skip</span><span style="color:#dcdcdc">(</span><span style="color:#b5cea8">266</span><span style="color:#dcdcdc">)</span><span style="color:#b4b4b4">.</span><span style="color:#dcdcaa">Take</span><span style="color:#dcdcdc">(</span><span style="color:#b5cea8">2</span><span style="color:#dcdcdc">)</span><span style="color:#b4b4b4">.</span><span style="color:#dcdcaa">ToArray</span><span style="color:#dcdcdc">());</span></div>
<span class="t" style="left:69.035px;top:588.91px;font-size:17.6px;line-height:17.6px;color:#2b91af;font-family:'Liberation Mono',monospace;transform:scaleX(0.9616);transform-origin:0 0;-webkit-text-stroke:0.3px;">313</span>
<div class="t" style="left:395.72px;top:587.91px;font-family:'Liberation Mono',monospace;font-size:17.6px;line-height:17.6px;white-space:pre;-webkit-text-stroke:0.3px;transform:scaleX(0.9616);transform-origin:0 0"><span style="color:#9cdcfe">RE_PresYukselmeSuresi_2</span><span style="color:#b4b4b4"> = </span><span style="color:#dcdcdc">S7</span><span style="color:#b4b4b4">.</span><span style="color:#dcdcdc">Net</span><span style="color:#b4b4b4">.</span><span style="color:#dcdcdc">Types</span><span style="color:#b4b4b4">.</span><span style="color:#4ec9b0">Word</span><span style="color:#b4b4b4">.</span><span style="color:#dcdcaa">FromByteArray</span><span style="color:#dcdcdc">(</span><span style="color:#9cdcfe">RecordBytes</span><span style="color:#b4b4b4">.</span><span style="color:#dcdcaa">Skip</span><span style="color:#dcdcdc">(</span><span style="color:#b5cea8">268</span><span style="color:#dcdcdc">)</span><span style="color:#b4b4b4">.</span><span style="color:#dcdcaa">Take</span><span style="color:#dcdcdc">(</span><span style="color:#b5cea8">2</span><span style="color:#dcdcdc">)</span><span style="color:#b4b4b4">.</span><span style="color:#dcdcaa">ToArray</span><span style="color:#dcdcdc">());</span></div>
<span class="t" style="left:69.035px;top:611.61px;font-size:17.6px;line-height:17.6px;color:#2b91af;font-family:'Liberation Mono',monospace;transform:scaleX(0.9616);transform-origin:0 0;-webkit-text-stroke:0.3px;">314</span>
<div class="t" style="left:395.72px;top:610.61px;font-family:'Liberation Mono',monospace;font-size:17.6px;line-height:17.6px;white-space:pre;-webkit-text-stroke:0.3px;transform:scaleX(0.9616);transform-origin:0 0"><span style="color:#9cdcfe">RE_SolsagRol_AltDurus_2</span><span style="color:#b4b4b4"> = </span><span style="color:#dcdcdc">S7</span><span style="color:#b4b4b4">.</span><span style="color:#dcdcdc">Net</span><span style="color:#b4b4b4">.</span><span style="color:#dcdcdc">Types</span><span style="color:#b4b4b4">.</span><span style="color:#4ec9b0">Word</span><span style="color:#b4b4b4">.</span><span style="color:#dcdcaa">FromByteArray</span><span style="color:#dcdcdc">(</span><span style="color:#9cdcfe">RecordBytes</span><span style="color:#b4b4b4">.</span><span style="color:#dcdcaa">Skip</span><span style="color:#dcdcdc">(</span><span style="color:#b5cea8">270</span><span style="color:#dcdcdc">)</span><span style="color:#b4b4b4">.</span><span style="color:#dcdcaa">Take</span><span style="color:#dcdcdc">(</span><span style="color:#b5cea8">2</span><span style="color:#dcdcdc">)</span><span style="color:#b4b4b4">.</span><span style="color:#dcdcaa">ToArray</span><span style="color:#dcdcdc">());</span></div>
<span class="t" style="left:69.035px;top:634.31px;font-size:17.6px;line-height:17.6px;color:#2b91af;font-family:'Liberation Mono',monospace;transform:scaleX(0.9616);transform-origin:0 0;-webkit-text-stroke:0.3px;">315</span>
<div class="t" style="left:395.72px;top:633.31px;font-family:'Liberation Mono',monospace;font-size:17.6px;line-height:17.6px;white-space:pre;-webkit-text-stroke:0.3px;transform:scaleX(0.9616);transform-origin:0 0"><span style="color:#9cdcfe">RE_SolSagRol_YukSet_2</span><span style="color:#b4b4b4">   = </span><span style="color:#dcdcdc">S7</span><span style="color:#b4b4b4">.</span><span style="color:#dcdcdc">Net</span><span style="color:#b4b4b4">.</span><span style="color:#dcdcdc">Types</span><span style="color:#b4b4b4">.</span><span style="color:#4ec9b0">Word</span><span style="color:#b4b4b4">.</span><span style="color:#dcdcaa">FromByteArray</span><span style="color:#dcdcdc">(</span><span style="color:#9cdcfe">RecordBytes</span><span style="color:#b4b4b4">.</span><span style="color:#dcdcaa">Skip</span><span style="color:#dcdcdc">(</span><span style="color:#b5cea8">272</span><span style="color:#dcdcdc">)</span><span style="color:#b4b4b4">.</span><span style="color:#dcdcaa">Take</span><span style="color:#dcdcdc">(</span><span style="color:#b5cea8">2</span><span style="color:#dcdcdc">)</span><span style="color:#b4b4b4">.</span><span style="color:#dcdcaa">ToArray</span><span style="color:#dcdcdc">());</span></div>
<span class="t" style="left:69.035px;top:657.01px;font-size:17.6px;line-height:17.6px;color:#2b91af;font-family:'Liberation Mono',monospace;transform:scaleX(0.9616);transform-origin:0 0;-webkit-text-stroke:0.3px;">316</span>
<div class="t" style="left:395.72px;top:656.01px;font-family:'Liberation Mono',monospace;font-size:17.6px;line-height:17.6px;white-space:pre;-webkit-text-stroke:0.3px;transform:scaleX(0.9616);transform-origin:0 0"><span style="color:#9cdcfe">RE_RolDonmeSetdegeri_2</span><span style="color:#b4b4b4">  = </span><span style="color:#dcdcdc">S7</span><span style="color:#b4b4b4">.</span><span style="color:#dcdcdc">Net</span><span style="color:#b4b4b4">.</span><span style="color:#dcdcdc">Types</span><span style="color:#b4b4b4">.</span><span style="color:#4ec9b0">Word</span><span style="color:#b4b4b4">.</span><span style="color:#dcdcaa">FromByteArray</span><span style="color:#dcdcdc">(</span><span style="color:#9cdcfe">RecordBytes</span><span style="color:#b4b4b4">.</span><span style="color:#dcdcaa">Skip</span><span style="color:#dcdcdc">(</span><span style="color:#b5cea8">274</span><span style="color:#dcdcdc">)</span><span style="color:#b4b4b4">.</span><span style="color:#dcdcaa">Take</span><span style="color:#dcdcdc">(</span><span style="color:#b5cea8">2</span><span style="color:#dcdcdc">)</span><span style="color:#b4b4b4">.</span><span style="color:#dcdcaa">ToArray</span><span style="color:#dcdcdc">());</span></div>
<span class="t" style="left:69.035px;top:679.71px;font-size:17.6px;line-height:17.6px;color:#2b91af;font-family:'Liberation Mono',monospace;transform:scaleX(0.9616);transform-origin:0 0;-webkit-text-stroke:0.3px;">317</span>
<div class="t" style="left:395.72px;top:678.71px;font-family:'Liberation Mono',monospace;font-size:17.6px;line-height:17.6px;white-space:pre;-webkit-text-stroke:0.3px;transform:scaleX(0.9616);transform-origin:0 0"><span style="color:#9cdcfe">RE_Manipulator_Poz_2</span><span style="color:#b4b4b4">    = </span><span style="color:#dcdcdc">S7</span><span style="color:#b4b4b4">.</span><span style="color:#dcdcdc">Net</span><span style="color:#b4b4b4">.</span><span style="color:#dcdcdc">Types</span><span style="color:#b4b4b4">.</span><span style="color:#4ec9b0">Word</span><span style="color:#b4b4b4">.</span><span style="color:#dcdcaa">FromByteArray</span><span style="color:#dcdcdc">(</span><span style="color:#9cdcfe">RecordBytes</span><span style="color:#b4b4b4">.</span><span style="color:#dcdcaa">Skip</span><span style="color:#dcdcdc">(</span><span style="color:#b5cea8">276</span><span style="color:#dcdcdc">)</span><span style="color:#b4b4b4">.</span><span style="color:#dcdcaa">Take</span><span style="color:#dcdcdc">(</span><span style="color:#b5cea8">2</span><span style="color:#dcdcdc">)</span><span style="color:#b4b4b4">.</span><span style="color:#dcdcaa">ToArray</span><span style="color:#dcdcdc">());</span></div>
<span class="t" style="left:69.035px;top:702.41px;font-size:17.6px;line-height:17.6px;color:#2b91af;font-family:'Liberation Mono',monospace;transform:scaleX(0.9616);transform-origin:0 0;-webkit-text-stroke:0.3px;">318</span>
<div class="t" style="left:395.72px;top:701.41px;font-family:'Liberation Mono',monospace;font-size:17.6px;line-height:17.6px;white-space:pre;-webkit-text-stroke:0.3px;transform:scaleX(0.9616);transform-origin:0 0"><span style="color:#9cdcfe">RE_Schwen_KolAcisi_2</span><span style="color:#b4b4b4">    = </span><span style="color:#dcdcdc">S7</span><span style="color:#b4b4b4">.</span><span style="color:#dcdcdc">Net</span><span style="color:#b4b4b4">.</span><span style="color:#dcdcdc">Types</span><span style="color:#b4b4b4">.</span><span style="color:#4ec9b0">Word</span><span style="color:#b4b4b4">.</span><span style="color:#dcdcaa">FromByteArray</span><span style="color:#dcdcdc">(</span><span style="color:#9cdcfe">RecordBytes</span><span style="color:#b4b4b4">.</span><span style="color:#dcdcaa">Skip</span><span style="color:#dcdcdc">(</span><span style="color:#b5cea8">280</span><span style="color:#dcdcdc">)</span><span style="color:#b4b4b4">.</span><span style="color:#dcdcaa">Take</span><span style="color:#dcdcdc">(</span><span style="color:#b5cea8">2</span><span style="color:#dcdcdc">)</span><span style="color:#b4b4b4">.</span><span style="color:#dcdcaa">ToArray</span><span style="color:#dcdcdc">());</span></div>
<span class="t" style="left:69.035px;top:725.11px;font-size:17.6px;line-height:17.6px;color:#2b91af;font-family:'Liberation Mono',monospace;transform:scaleX(0.9616);transform-origin:0 0;-webkit-text-stroke:0.3px;">319</span>
<div class="t" style="left:395.72px;top:724.11px;font-family:'Liberation Mono',monospace;font-size:17.6px;line-height:17.6px;white-space:pre;-webkit-text-stroke:0.3px;transform:scaleX(0.9616);transform-origin:0 0"><span style="color:#9cdcfe">RE_SolSagRol_Yuk_Set_2</span><span style="color:#b4b4b4">  = </span><span style="color:#dcdcdc">S7</span><span style="color:#b4b4b4">.</span><span style="color:#dcdcdc">Net</span><span style="color:#b4b4b4">.</span><span style="color:#dcdcdc">Types</span><span style="color:#b4b4b4">.</span><span style="color:#4ec9b0">Word</span><span style="color:#b4b4b4">.</span><span style="color:#dcdcaa">FromByteArray</span><span style="color:#dcdcdc">(</span><span style="color:#9cdcfe">RecordBytes</span><span style="color:#b4b4b4">.</span><span style="color:#dcdcaa">Skip</span><span style="color:#dcdcdc">(</span><span style="color:#b5cea8">284</span><span style="color:#dcdcdc">)</span><span style="color:#b4b4b4">.</span><span style="color:#dcdcaa">Take</span><span style="color:#dcdcdc">(</span><span style="color:#b5cea8">2</span><span style="color:#dcdcdc">)</span><span style="color:#b4b4b4">.</span><span style="color:#dcdcaa">ToArray</span><span style="color:#dcdcdc">());</span></div>
<span class="t" style="left:69.035px;top:747.81px;font-size:17.6px;line-height:17.6px;color:#2b91af;font-family:'Liberation Mono',monospace;transform:scaleX(0.9616);transform-origin:0 0;-webkit-text-stroke:0.3px;">320</span>
<div class="t" style="left:395.72px;top:746.81px;font-family:'Liberation Mono',monospace;font-size:17.6px;line-height:17.6px;white-space:pre;-webkit-text-stroke:0.3px;transform:scaleX(0.9616);transform-origin:0 0"><span style="color:#9cdcfe">RE_Ekipman_SW_2</span><span style="color:#b4b4b4">         = </span><span style="color:#dcdcdc">S7</span><span style="color:#b4b4b4">.</span><span style="color:#dcdcdc">Net</span><span style="color:#b4b4b4">.</span><span style="color:#dcdcdc">Types</span><span style="color:#b4b4b4">.</span><span style="color:#4ec9b0">Word</span><span style="color:#b4b4b4">.</span><span style="color:#dcdcaa">FromByteArray</span><span style="color:#dcdcdc">(</span><span style="color:#9cdcfe">RecordBytes</span><span style="color:#b4b4b4">.</span><span style="color:#dcdcaa">Skip</span><span style="color:#dcdcdc">(</span><span style="color:#b5cea8">296</span><span style="color:#dcdcdc">)</span><span style="color:#b4b4b4">.</span><span style="color:#dcdcaa">Take</span><span style="color:#dcdcdc">(</span><span style="color:#b5cea8">2</span><span style="color:#dcdcdc">)</span><span style="color:#b4b4b4">.</span><span style="color:#dcdcaa">ToArray</span><span style="color:#dcdcdc">());</span></div>
<span class="t" style="left:69.035px;top:770.51px;font-size:17.6px;line-height:17.6px;color:#2b91af;font-family:'Liberation Mono',monospace;transform:scaleX(0.9616);transform-origin:0 0;-webkit-text-stroke:0.3px;">321</span>
<span class="t" style="left:69.035px;top:793.21px;font-size:17.6px;line-height:17.6px;color:#2b91af;font-family:'Liberation Mono',monospace;transform:scaleX(0.9616);transform-origin:0 0;-webkit-text-stroke:0.3px;">322</span>
<div class="t" style="left:395.72px;top:792.21px;font-family:'Liberation Mono',monospace;font-size:17.6px;line-height:17.6px;white-space:pre;-webkit-text-stroke:0.3px;transform:scaleX(0.9616);transform-origin:0 0"><span style="color:#57a64a">//// Third  Package Registers</span></div>
<span class="t" style="left:69.035px;top:815.91px;font-size:17.6px;line-height:17.6px;color:#2b91af;font-family:'Liberation Mono',monospace;transform:scaleX(0.9616);transform-origin:0 0;-webkit-text-stroke:0.3px;">323</span>
<div class="t" style="left:395.72px;top:814.91px;font-family:'Liberation Mono',monospace;font-size:17.6px;line-height:17.6px;white-space:pre;-webkit-text-stroke:0.3px;transform:scaleX(0.9616);transform-origin:0 0"><span style="color:#9cdcfe">RE_DataSetNo_3</span><span style="color:#b4b4b4">          = </span><span style="color:#dcdcdc">S7</span><span style="color:#b4b4b4">.</span><span style="color:#dcdcdc">Net</span><span style="color:#b4b4b4">.</span><span style="color:#dcdcdc">Types</span><span style="color:#b4b4b4">.</span><span style="color:#4ec9b0">Word</span><span style="color:#b4b4b4">.</span><span style="color:#dcdcaa">FromByteArray</span><span style="color:#dcdcdc">(</span><span style="color:#9cdcfe">RecordBytes</span><span style="color:#b4b4b4">.</span><span style="color:#dcdcaa">Skip</span><span style="color:#dcdcdc">(</span><span style="color:#b5cea8">322</span><span style="color:#dcdcdc">)</span><span style="color:#b4b4b4">.</span><span style="color:#dcdcaa">Take</span><span style="color:#dcdcdc">(</span><span style="color:#b5cea8">2</span><span style="color:#dcdcdc">)</span><span style="color:#b4b4b4">.</span><span style="color:#dcdcaa">ToArray</span><span style="color:#dcdcdc">());</span></div>
<span class="t" style="left:69.035px;top:838.61px;font-size:17.6px;line-height:17.6px;color:#2b91af;font-family:'Liberation Mono',monospace;transform:scaleX(0.9616);transform-origin:0 0;-webkit-text-stroke:0.3px;">324</span>
<div class="t" style="left:395.72px;top:837.61px;font-family:'Liberation Mono',monospace;font-size:17.6px;line-height:17.6px;white-space:pre;-webkit-text-stroke:0.3px;transform:scaleX(0.9616);transform-origin:0 0"><span style="color:#9cdcfe">RE_PreslemeBasinci_3</span><span style="color:#b4b4b4">    = </span><span style="color:#dcdcdc">S7</span><span style="color:#b4b4b4">.</span><span style="color:#dcdcdc">Net</span><span style="color:#b4b4b4">.</span><span style="color:#dcdcdc">Types</span><span style="color:#b4b4b4">.</span><span style="color:#4ec9b0">Word</span><span style="color:#b4b4b4">.</span><span style="color:#dcdcaa">FromByteArray</span><span style="color:#dcdcdc">(</span><span style="color:#9cdcfe">RecordBytes</span><span style="color:#b4b4b4">.</span><span style="color:#dcdcaa">Skip</span><span style="color:#dcdcdc">(</span><span style="color:#b5cea8">326</span><span style="color:#dcdcdc">)</span><span style="color:#b4b4b4">.</span><span style="color:#dcdcaa">Take</span><span style="color:#dcdcdc">(</span><span style="color:#b5cea8">2</span><span style="color:#dcdcdc">)</span><span style="color:#b4b4b4">.</span><span style="color:#dcdcaa">ToArray</span><span style="color:#dcdcdc">());</span></div>
<span class="t" style="left:69.035px;top:861.31px;font-size:17.6px;line-height:17.6px;color:#2b91af;font-family:'Liberation Mono',monospace;transform:scaleX(0.9616);transform-origin:0 0;-webkit-text-stroke:0.3px;">325</span>
<div class="t" style="left:395.72px;top:860.31px;font-family:'Liberation Mono',monospace;font-size:17.6px;line-height:17.6px;white-space:pre;-webkit-text-stroke:0.3px;transform:scaleX(0.9616);transform-origin:0 0"><span style="color:#9cdcfe">RE_PresYukselmeSuresi_3</span><span style="color:#b4b4b4"> = </span><span style="color:#dcdcdc">S7</span><span style="color:#b4b4b4">.</span><span style="color:#dcdcdc">Net</span><span style="color:#b4b4b4">.</span><span style="color:#dcdcdc">Types</span><span style="color:#b4b4b4">.</span><span style="color:#4ec9b0">Word</span><span style="color:#b4b4b4">.</span><span style="color:#dcdcaa">FromByteArray</span><span style="color:#dcdcdc">(</span><span style="color:#9cdcfe">RecordBytes</span><span style="color:#b4b4b4">.</span><span style="color:#dcdcaa">Skip</span><span style="color:#dcdcdc">(</span><span style="color:#b5cea8">328</span><span style="color:#dcdcdc">)</span><span style="color:#b4b4b4">.</span><span style="color:#dcdcaa">Take</span><span style="color:#dcdcdc">(</span><span style="color:#b5cea8">2</span><span style="color:#dcdcdc">)</span><span style="color:#b4b4b4">.</span><span style="color:#dcdcaa">ToArray</span><span style="color:#dcdcdc">());</span></div>
<span class="t" style="left:69.035px;top:884.01px;font-size:17.6px;line-height:17.6px;color:#2b91af;font-family:'Liberation Mono',monospace;transform:scaleX(0.9616);transform-origin:0 0;-webkit-text-stroke:0.3px;">326</span>
<div class="t" style="left:395.72px;top:883.01px;font-family:'Liberation Mono',monospace;font-size:17.6px;line-height:17.6px;white-space:pre;-webkit-text-stroke:0.3px;transform:scaleX(0.9616);transform-origin:0 0"><span style="color:#9cdcfe">RE_SolsagRol_AltDurus_3</span><span style="color:#b4b4b4"> = </span><span style="color:#dcdcdc">S7</span><span style="color:#b4b4b4">.</span><span style="color:#dcdcdc">Net</span><span style="color:#b4b4b4">.</span><span style="color:#dcdcdc">Types</span><span style="color:#b4b4b4">.</span><span style="color:#4ec9b0">Word</span><span style="color:#b4b4b4">.</span><span style="color:#dcdcaa">FromByteArray</span><span style="color:#dcdcdc">(</span><span style="color:#9cdcfe">RecordBytes</span><span style="color:#b4b4b4">.</span><span style="color:#dcdcaa">Skip</span><span style="color:#dcdcdc">(</span><span style="color:#b5cea8">330</span><span style="color:#dcdcdc">)</span><span style="color:#b4b4b4">.</span><span style="color:#dcdcaa">Take</span><span style="color:#dcdcdc">(</span><span style="color:#b5cea8">2</span><span style="color:#dcdcdc">)</span><span style="color:#b4b4b4">.</span><span style="color:#dcdcaa">ToArray</span><span style="color:#dcdcdc">());</span></div>
<span class="t" style="left:69.035px;top:906.71px;font-size:17.6px;line-height:17.6px;color:#2b91af;font-family:'Liberation Mono',monospace;transform:scaleX(0.9616);transform-origin:0 0;-webkit-text-stroke:0.3px;">327</span>
<div class="t" style="left:395.72px;top:905.71px;font-family:'Liberation Mono',monospace;font-size:17.6px;line-height:17.6px;white-space:pre;-webkit-text-stroke:0.3px;transform:scaleX(0.9616);transform-origin:0 0"><span style="color:#9cdcfe">RE_SolSagRol_YukSet_3</span><span style="color:#b4b4b4">   = </span><span style="color:#dcdcdc">S7</span><span style="color:#b4b4b4">.</span><span style="color:#dcdcdc">Net</span><span style="color:#b4b4b4">.</span><span style="color:#dcdcdc">Types</span><span style="color:#b4b4b4">.</span><span style="color:#4ec9b0">Word</span><span style="color:#b4b4b4">.</span><span style="color:#dcdcaa">FromByteArray</span><span style="color:#dcdcdc">(</span><span style="color:#9cdcfe">RecordBytes</span><span style="color:#b4b4b4">.</span><span style="color:#dcdcaa">Skip</span><span style="color:#dcdcdc">(</span><span style="color:#b5cea8">332</span><span style="color:#dcdcdc">)</span><span style="color:#b4b4b4">.</span><span style="color:#dcdcaa">Take</span><span style="color:#dcdcdc">(</span><span style="color:#b5cea8">2</span><span style="color:#dcdcdc">)</span><span style="color:#b4b4b4">.</span><span style="color:#dcdcaa">ToArray</span><span style="color:#dcdcdc">());</span></div>
<span class="t" style="left:69.035px;top:929.41px;font-size:17.6px;line-height:17.6px;color:#2b91af;font-family:'Liberation Mono',monospace;transform:scaleX(0.9616);transform-origin:0 0;-webkit-text-stroke:0.3px;">328</span>
<div class="t" style="left:395.72px;top:928.41px;font-family:'Liberation Mono',monospace;font-size:17.6px;line-height:17.6px;white-space:pre;-webkit-text-stroke:0.3px;transform:scaleX(0.9616);transform-origin:0 0"><span style="color:#9cdcfe">RE_RolDonmeSetdegeri_3</span><span style="color:#b4b4b4">  = </span><span style="color:#dcdcdc">S7</span><span style="color:#b4b4b4">.</span><span style="color:#dcdcdc">Net</span><span style="color:#b4b4b4">.</span><span style="color:#dcdcdc">Types</span><span style="color:#b4b4b4">.</span><span style="color:#4ec9b0">Word</span><span style="color:#b4b4b4">.</span><span style="color:#dcdcaa">FromByteArray</span><span style="color:#dcdcdc">(</span><span style="color:#9cdcfe">RecordBytes</span><span style="color:#b4b4b4">.</span><span style="color:#dcdcaa">Skip</span><span style="color:#dcdcdc">(</span><span style="color:#b5cea8">334</span><span style="color:#dcdcdc">)</span><span style="color:#b4b4b4">.</span><span style="color:#dcdcaa">Take</span><span style="color:#dcdcdc">(</span><span style="color:#b5cea8">2</span><span style="color:#dcdcdc">)</span><span style="color:#b4b4b4">.</span><span style="color:#dcdcaa">ToArray</span><span style="color:#dcdcdc">());</span></div>
<span class="t" style="left:69.035px;top:952.11px;font-size:17.6px;line-height:17.6px;color:#2b91af;font-family:'Liberation Mono',monospace;transform:scaleX(0.9616);transform-origin:0 0;-webkit-text-stroke:0.3px;">329</span>
<div class="t" style="left:395.72px;top:951.11px;font-family:'Liberation Mono',monospace;font-size:17.6px;line-height:17.6px;white-space:pre;-webkit-text-stroke:0.3px;transform:scaleX(0.9616);transform-origin:0 0"><span style="color:#9cdcfe">RE_Manipulator_Poz_3</span><span style="color:#b4b4b4">    = </span><span style="color:#dcdcdc">S7</span><span style="color:#b4b4b4">.</span><span style="color:#dcdcdc">Net</span><span style="color:#b4b4b4">.</span><span style="color:#dcdcdc">Types</span><span style="color:#b4b4b4">.</span><span style="color:#4ec9b0">Word</span><span style="color:#b4b4b4">.</span><span style="color:#dcdcaa">FromByteArray</span><span style="color:#dcdcdc">(</span><span style="color:#9cdcfe">RecordBytes</span><span style="color:#b4b4b4">.</span><span style="color:#dcdcaa">Skip</span><span style="color:#dcdcdc">(</span><span style="color:#b5cea8">336</span><span style="color:#dcdcdc">)</span><span style="color:#b4b4b4">.</span><span style="color:#dcdcaa">Take</span><span style="color:#dcdcdc">(</span><span style="color:#b5cea8">2</span><span style="color:#dcdcdc">)</span><span style="color:#b4b4b4">.</span><span style="color:#dcdcaa">ToArray</span><span style="color:#dcdcdc">());</span></div>
<span class="t" style="left:69.035px;top:974.81px;font-size:17.6px;line-height:17.6px;color:#2b91af;font-family:'Liberation Mono',monospace;transform:scaleX(0.9616);transform-origin:0 0;-webkit-text-stroke:0.3px;">330</span>
<div class="t" style="left:395.72px;top:973.81px;font-family:'Liberation Mono',monospace;font-size:17.6px;line-height:17.6px;white-space:pre;-webkit-text-stroke:0.3px;transform:scaleX(0.9616);transform-origin:0 0"><span style="color:#9cdcfe">RE_Schwen_KolAcisi_3</span><span style="color:#b4b4b4">    = </span><span style="color:#dcdcdc">S7</span><span style="color:#b4b4b4">.</span><span style="color:#dcdcdc">Net</span><span style="color:#b4b4b4">.</span><span style="color:#dcdcdc">Types</span><span style="color:#b4b4b4">.</span><span style="color:#4ec9b0">Word</span><span style="color:#b4b4b4">.</span><span style="color:#dcdcaa">FromByteArray</span><span style="color:#dcdcdc">(</span><span style="color:#9cdcfe">RecordBytes</span><span style="color:#b4b4b4">.</span><span style="color:#dcdcaa">Skip</span><span style="color:#dcdcdc">(</span><span style="color:#b5cea8">340</span><span style="color:#dcdcdc">)</span><span style="color:#b4b4b4">.</span><span style="color:#dcdcaa">Take</span><span style="color:#dcdcdc">(</span><span style="color:#b5cea8">2</span><span style="color:#dcdcdc">)</span><span style="color:#b4b4b4">.</span><span style="color:#dcdcaa">ToArray</span><span style="color:#dcdcdc">());</span></div>
<span class="t" style="left:69.035px;top:997.51px;font-size:17.6px;line-height:17.6px;color:#2b91af;font-family:'Liberation Mono',monospace;transform:scaleX(0.9616);transform-origin:0 0;-webkit-text-stroke:0.3px;">331</span>
<div class="t" style="left:395.72px;top:996.51px;font-family:'Liberation Mono',monospace;font-size:17.6px;line-height:17.6px;white-space:pre;-webkit-text-stroke:0.3px;transform:scaleX(0.9616);transform-origin:0 0"><span style="color:#9cdcfe">RE_SolSagRol_Yuk_Set_3</span><span style="color:#b4b4b4">  = </span><span style="color:#dcdcdc">S7</span><span style="color:#b4b4b4">.</span><span style="color:#dcdcdc">Net</span><span style="color:#b4b4b4">.</span><span style="color:#dcdcdc">Types</span><span style="color:#b4b4b4">.</span><span style="color:#4ec9b0">Word</span><span style="color:#b4b4b4">.</span><span style="color:#dcdcaa">FromByteArray</span><span style="color:#dcdcdc">(</span><span style="color:#9cdcfe">RecordBytes</span><span style="color:#b4b4b4">.</span><span style="color:#dcdcaa">Skip</span><span style="color:#dcdcdc">(</span><span style="color:#b5cea8">344</span><span style="color:#dcdcdc">)</span><span style="color:#b4b4b4">.</span><span style="color:#dcdcaa">Take</span><span style="color:#dcdcdc">(</span><span style="color:#b5cea8">2</span><span style="color:#dcdcdc">)</span><span style="color:#b4b4b4">.</span><span style="color:#dcdcaa">ToArray</span><span style="color:#dcdcdc">());</span></div>
<span class="t" style="left:69.035px;top:1020.21px;font-size:17.6px;line-height:17.6px;color:#2b91af;font-family:'Liberation Mono',monospace;transform:scaleX(0.9616);transform-origin:0 0;-webkit-text-stroke:0.3px;">332</span>
<div class="t" style="left:395.72px;top:1019.21px;font-family:'Liberation Mono',monospace;font-size:17.6px;line-height:17.6px;white-space:pre;-webkit-text-stroke:0.3px;transform:scaleX(0.9616);transform-origin:0 0"><span style="color:#9cdcfe">RE_Ekipman_SW_3</span><span style="color:#b4b4b4">         = </span><span style="color:#dcdcdc">S7</span><span style="color:#b4b4b4">.</span><span style="color:#dcdcdc">Net</span><span style="color:#b4b4b4">.</span><span style="color:#dcdcdc">Types</span><span style="color:#b4b4b4">.</span><span style="color:#4ec9b0">Word</span><span style="color:#b4b4b4">.</span><span style="color:#dcdcaa">FromByteArray</span><span style="color:#dcdcdc">(</span><span style="color:#9cdcfe">RecordBytes</span><span style="color:#b4b4b4">.</span><span style="color:#dcdcaa">Skip</span><span style="color:#dcdcdc">(</span><span style="color:#b5cea8">356</span><span style="color:#dcdcdc">)</span><span style="color:#b4b4b4">.</span><span style="color:#dcdcaa">Take</span><span style="color:#dcdcdc">(</span><span style="color:#b5cea8">2</span><span style="color:#dcdcdc">)</span><span style="color:#b4b4b4">.</span><span style="color:#dcdcaa">ToArray</span><span style="color:#dcdcdc">());</span></div>
<span class="t" style="left:69.035px;top:1042.91px;font-size:17.6px;line-height:17.6px;color:#2b91af;font-family:'Liberation Mono',monospace;transform:scaleX(0.9616);transform-origin:0 0;-webkit-text-stroke:0.3px;">333</span>
<span class="t" style="left:69.035px;top:1065.61px;font-size:17.6px;line-height:17.6px;color:#2b91af;font-family:'Liberation Mono',monospace;transform:scaleX(0.9616);transform-origin:0 0;-webkit-text-stroke:0.3px;">334</span>
<div class="t" style="left:395.72px;top:1064.61px;font-family:'Liberation Mono',monospace;font-size:17.6px;line-height:17.6px;white-space:pre;-webkit-text-stroke:0.3px;transform:scaleX(0.9616);transform-origin:0 0"><span style="color:#57a64a">//// Fourth  Package Registers</span></div>
</div>
</body></html>
